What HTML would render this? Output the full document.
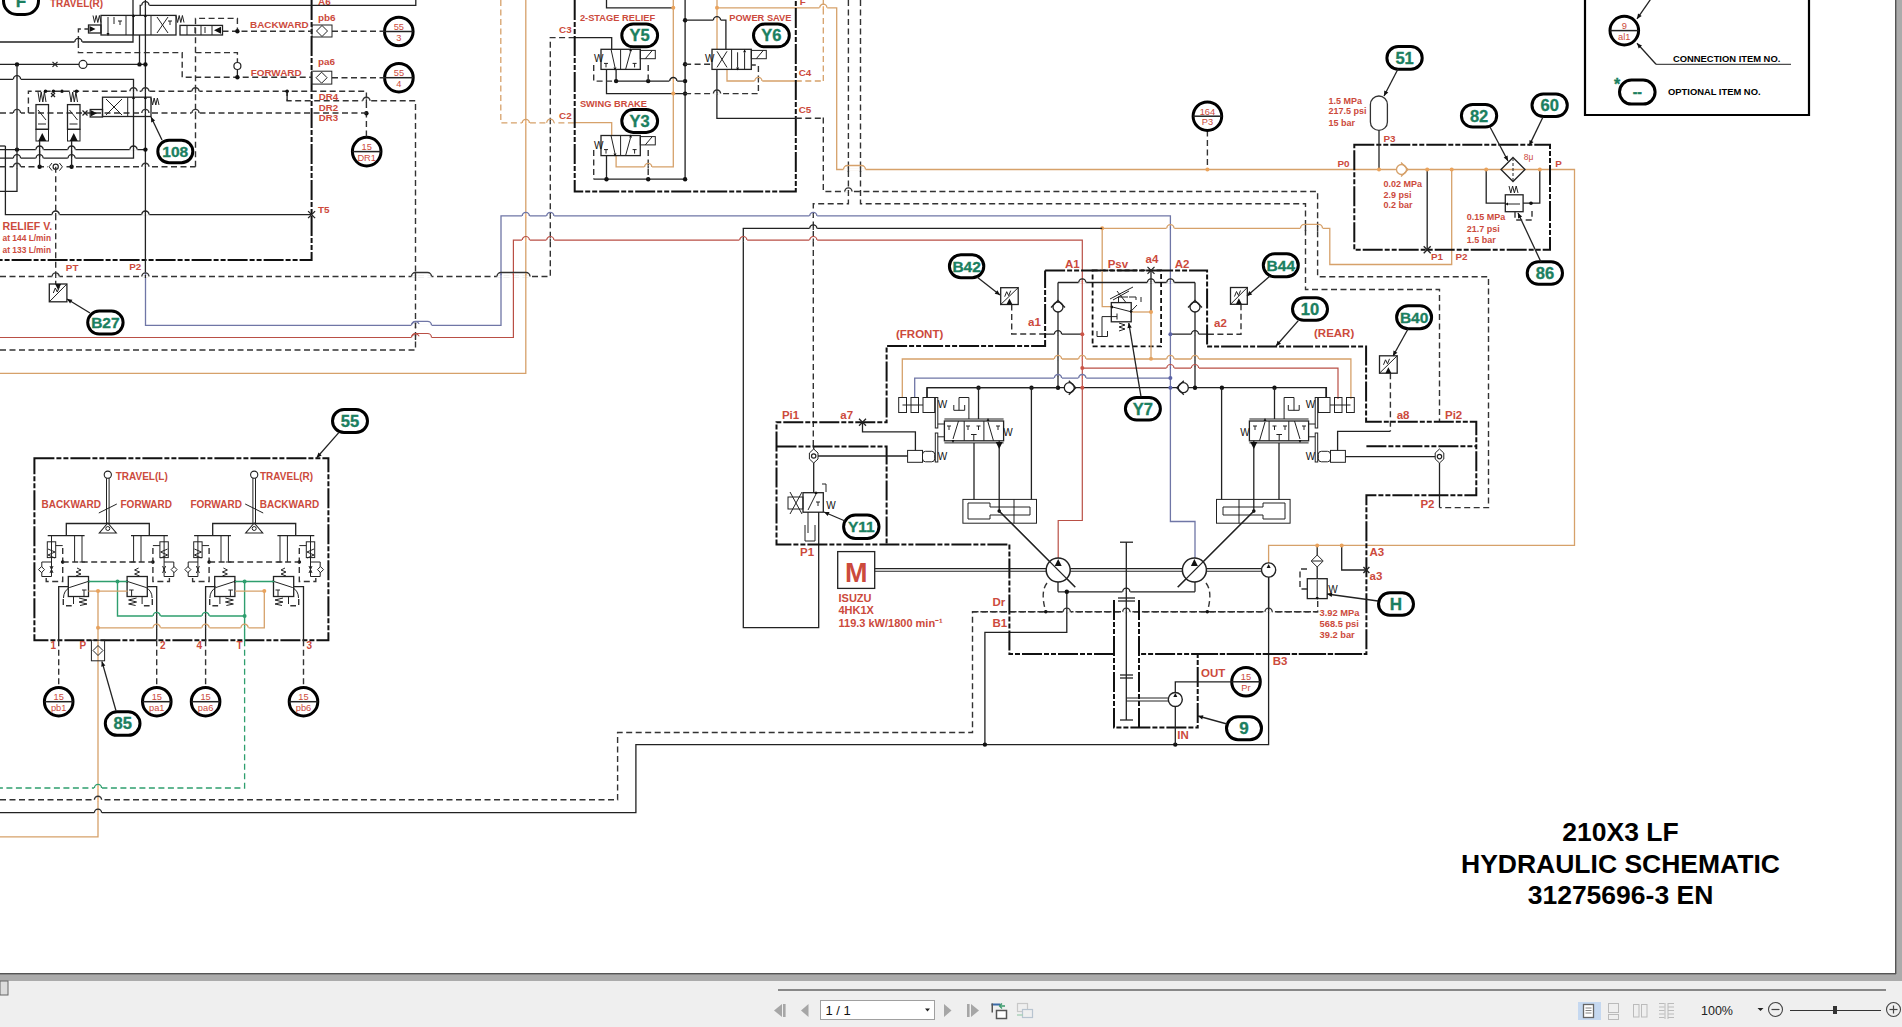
<!DOCTYPE html>
<html><head><meta charset="utf-8">
<style>
html,body{margin:0;padding:0;width:1902px;height:1027px;overflow:hidden;background:#fff;font-family:"Liberation Sans",sans-serif;}
#pg{position:absolute;left:0;top:0;width:1902px;height:1027px;}
svg text{font-family:"Liberation Sans",sans-serif;}
.k{stroke:#222;stroke-width:1.3;fill:none}
.kc{stroke:#222;stroke-width:1.5;fill:none}
.kt{stroke:#222;stroke-width:1;fill:none}
.kd{stroke:#333;stroke-width:1.4;fill:none;stroke-dasharray:6 3.5}
.bx{stroke:#111;stroke-width:2;fill:none;stroke-dasharray:20 2 5 2 5 2}
.bxd{stroke:#111;stroke-width:1.8;fill:none;stroke-dasharray:5 3}
.o{stroke:#d6a16a;stroke-width:1.3;fill:none}
.od{stroke:#d6a16a;stroke-width:1.3;fill:none;stroke-dasharray:6 3.5}
.b{stroke:#6f76a6;stroke-width:1.3;fill:none}
.r{stroke:#b94f45;stroke-width:1.2;fill:none}
.g{stroke:#2e9e6e;stroke-width:1.4;fill:none}
.gd{stroke:#2e9e6e;stroke-width:1.3;fill:none;stroke-dasharray:6 3.5}
.pill{stroke:#000;stroke-width:3;fill:#fff}
.cc{stroke:#000;stroke-width:3;fill:#fff}
.t{fill:#cc4a3c;font-weight:bold}
.gt{fill:#1b7f60;font-weight:bold;stroke:#1b7f60;stroke-width:0.35}
.bt{fill:#000;font-weight:bold}
.wf{fill:#fff}
</style></head><body>
<svg id="pg" width="1902" height="1027" viewBox="0 0 1902 1027">
<rect x="0" y="974" width="1902" height="7" fill="#ababab"/>
<rect x="1896" y="0" width="6" height="981" fill="#ababab"/>
<rect x="0" y="973" width="1896" height="1.4" fill="#555"/>
<rect x="1895" y="0" width="1.4" height="974" fill="#555"/>
<rect x="0" y="981" width="1902" height="46" fill="#efefef"/>
<rect x="0" y="981" width="8" height="14" fill="#dcdcdc" stroke="#666" stroke-width="1"/>
<rect x="778" y="989" width="1108" height="2" fill="#888"/>
<polygon points="774,1010.5 782,1004 782,1017" fill="#a6a6a6"/><rect x="783" y="1004" width="2.6" height="13" fill="#a6a6a6"/>
<polygon points="801,1010.5 808.5,1004 808.5,1017" fill="#a6a6a6"/>
<rect x="820.5" y="1000.5" width="114" height="19" fill="#fff" stroke="#a0a0a0" stroke-width="1"/>
<text x="825.5" y="1015" font-size="13" fill="#111" style="font-family:'Liberation Sans'">1 / 1</text>
<polygon points="925,1008.5 930,1008.5 927.5,1011.5" fill="#222"/>
<polygon points="951.5,1010.5 944,1004 944,1017" fill="#a6a6a6"/>
<rect x="967" y="1004" width="2.6" height="13" fill="#a6a6a6"/><polygon points="979,1010.5 971,1004 971,1017" fill="#a6a6a6"/>
<rect x="991.5" y="1003.5" width="9" height="2" fill="#3b6aa8"/><rect x="991.5" y="1003.5" width="1.5" height="9" fill="#555"/>
<rect x="996.5" y="1010.5" width="10" height="8" fill="#fff" stroke="#555" stroke-width="1.5"/>
<polyline points="1005,1006 1000,1006" stroke="#3a9a6a" stroke-width="1.5" fill="none"/><polyline points="1002,1003.5 999.5,1006 1002,1008.5" stroke="#3a9a6a" stroke-width="1.2" fill="none"/>
<rect x="1017.5" y="1003.5" width="10" height="8" fill="none" stroke="#c8c8c8" stroke-width="1.2"/><rect x="1022.5" y="1009.5" width="10" height="8" fill="#efefef" stroke="#b8c4d0" stroke-width="1.2"/>
<polyline points="1017,1015 1023,1015" stroke="#a8d0b8" stroke-width="1.4" fill="none"/>
<rect x="1578" y="1002" width="23" height="18" fill="#c5d8f0"/>
<rect x="1583.5" y="1004.5" width="10" height="13" fill="#fff" stroke="#666" stroke-width="1.3"/>
<line x1="1585.5" y1="1008" x2="1591.5" y2="1008" stroke="#777" stroke-width="0.9"/>
<line x1="1585.5" y1="1010.5" x2="1591.5" y2="1010.5" stroke="#777" stroke-width="0.9"/>
<line x1="1585.5" y1="1013" x2="1591.5" y2="1013" stroke="#777" stroke-width="0.9"/>
<rect x="1608.5" y="1003.5" width="10" height="9" fill="none" stroke="#bbb" stroke-width="1"/><rect x="1608.5" y="1014.5" width="10" height="5" fill="none" stroke="#bbb" stroke-width="1"/>
<rect x="1633.5" y="1004.5" width="5.5" height="12.5" fill="none" stroke="#bbb" stroke-width="1"/><rect x="1641.5" y="1004.5" width="5.5" height="12.5" fill="none" stroke="#bbb" stroke-width="1"/>
<line x1="1659" y1="1003.5" x2="1664.5" y2="1003.5" stroke="#bbb" stroke-width="1"/><line x1="1668" y1="1003.5" x2="1674" y2="1003.5" stroke="#bbb" stroke-width="1"/>
<line x1="1659" y1="1007" x2="1664.5" y2="1007" stroke="#bbb" stroke-width="1"/><line x1="1668" y1="1007" x2="1674" y2="1007" stroke="#bbb" stroke-width="1"/>
<line x1="1659" y1="1010.5" x2="1664.5" y2="1010.5" stroke="#bbb" stroke-width="1"/><line x1="1668" y1="1010.5" x2="1674" y2="1010.5" stroke="#bbb" stroke-width="1"/>
<line x1="1659" y1="1014" x2="1664.5" y2="1014" stroke="#bbb" stroke-width="1"/><line x1="1668" y1="1014" x2="1674" y2="1014" stroke="#bbb" stroke-width="1"/>
<line x1="1659" y1="1017.5" x2="1664.5" y2="1017.5" stroke="#bbb" stroke-width="1"/><line x1="1668" y1="1017.5" x2="1674" y2="1017.5" stroke="#bbb" stroke-width="1"/>
<line x1="1665" y1="1003" x2="1665" y2="1019" stroke="#bbb" stroke-width="1"/><line x1="1668" y1="1003" x2="1668" y2="1019" stroke="#bbb" stroke-width="1"/>
<text x="1701" y="1015" font-size="12.5" fill="#222">100%</text>
<polygon points="1757.5,1008 1763.5,1008 1760.5,1011" fill="#222"/>
<circle cx="1775.5" cy="1009.5" r="7" fill="none" stroke="#444" stroke-width="1.1"/><line x1="1771.5" y1="1009.5" x2="1779.5" y2="1009.5" stroke="#444" stroke-width="1.2"/>
<line x1="1790" y1="1010.5" x2="1881" y2="1010.5" stroke="#333" stroke-width="1"/><rect x="1833" y="1006" width="4" height="8" fill="#333"/>
<circle cx="1893.5" cy="1009.5" r="7" fill="none" stroke="#444" stroke-width="1.1"/><line x1="1889.5" y1="1009.5" x2="1897.5" y2="1009.5" stroke="#444" stroke-width="1.2"/><line x1="1893.5" y1="1005.5" x2="1893.5" y2="1013.5" stroke="#444" stroke-width="1.2"/>
<text class="bt" x="1620.5" y="840.5" font-size="26.5" text-anchor="middle" >210X3 LF</text>
<text class="bt" x="1620.5" y="872.5" font-size="26.5" text-anchor="middle" >HYDRAULIC SCHEMATIC</text>
<text class="bt" x="1620.5" y="903.5" font-size="26.5" text-anchor="middle" >31275696-3 EN</text>
<polyline points="1585,0 1585,115 1809,115 1809,0" stroke="#000" stroke-width="2.2" fill="none"/>
<circle class="cc" cx="1624.3" cy="30.6" r="14.3"/>
<line class="kc" x1="1610.0" y1="30.6" x2="1638.6" y2="30.6"/>
<text class="t" x="1624.3" y="29.0" font-size="9.3" text-anchor="middle" style="font-weight:normal">9</text>
<text class="t" x="1624.3" y="39.6" font-size="9.3" text-anchor="middle" style="font-weight:normal">al1</text>
<line class="k" x1="1651.5" y1="-2.0" x2="1637.0" y2="18.9"/>
<polygon points="1637.0,18.9 1638.0,13.5 1641.7,16.0" fill="#111"/>
<line class="k" x1="1656.0" y1="64.3" x2="1637.0" y2="43.2"/>
<polygon points="1637.0,43.2 1642.0,45.4 1638.7,48.4" fill="#111"/>
<line class="kt" x1="1656.0" y1="64.3" x2="1791.0" y2="64.3"/>
<text class="bt" x="1673.0" y="62.0" font-size="9.4" text-anchor="start" >CONNECTION ITEM NO.</text>
<text class="gt" x="1614.0" y="90.0" font-size="16" text-anchor="start" >*</text>
<rect class="pill" x="1619.5" y="80.1" width="35.6" height="24" rx="12.0"/>
<text class="gt" x="1637.3" y="97.1" font-size="14" text-anchor="middle">--</text>
<text class="bt" x="1668.0" y="95.0" font-size="9.4" text-anchor="start" >OPTIONAL ITEM NO.</text>
<polyline class="b" points="145.5,272.0 145.5,325.3 501.0,325.3 501.0,215.9 1170.4,215.9 1170.4,521.5 1195.0,521.5 1195.0,558.0"/>
<polyline class="r" points="0.0,337.5 513.4,337.5 513.4,240.1 1082.3,240.1 1082.3,520.5 1058.2,520.5 1058.2,558.0"/>
<polyline class="o" points="0.0,373.3 525.8,373.3 525.8,0.0"/>
<polyline class="od" points="500.8,0.0 500.8,122.9 574.7,122.9"/>
<polyline class="o" points="574.7,122.7 611.7,122.7 611.7,135.5"/>
<polyline class="o" points="717.0,0.0 717.0,49.3"/>
<polyline class="o" points="717.0,7.8 836.7,7.8 836.7,169.5 1574.5,169.5 1574.5,545.3 1268.6,545.3 1268.6,563.0"/>
<polyline class="o" points="727.0,69.4 727.0,81.0 795.8,81.0"/>
<polyline class="od" points="795.8,81.0 823.3,81.0"/>
<polyline class="od" points="823.3,81.0 823.3,0.0"/>
<polyline class="o" points="673.3,0.0 673.3,166.9 616.1,166.9 616.1,155.0"/>
<polyline class="k" points="606.5,0.0 606.5,7.8 673.3,7.8"/>
<circle cx="673.3" cy="7.8" r="2" fill="#eaa35c"/>
<polyline class="o" points="1102.2,228.3 1329.8,228.3 1329.8,264.5 1451.7,264.5 1451.7,169.5"/>
<polyline class="o" points="1102.2,228.3 1102.2,306.6 1111.3,306.6"/>
<circle cx="1102.2" cy="228.3" r="2" fill="#eaa35c"/>
<polyline class="o" points="902.3,397.5 902.3,359.0 1350.9,359.0 1350.9,399.0"/>
<polyline class="o" points="1131.2,312.0 1151.0,312.0"/>
<circle cx="1151.0" cy="358.7" r="2" fill="#eaa35c"/>
<polyline class="r" points="1082.3,368.1 1338.0,368.1 1338.0,399.0"/>
<polyline class="b" points="914.7,397.0 914.7,378.1 1170.4,378.1"/>
<polyline class="k" points="742.7,228.4 1102.2,228.4"/>
<polyline class="k" points="743.3,228.4 743.3,627.6 818.7,627.6 818.7,512.0"/>
<polyline class="k" points="0.0,812.7 635.9,812.7 635.9,744.6 1268.6,744.6 1268.6,577.0"/>
<polyline class="k" points="984.9,744.6 984.9,632.4 1066.8,632.4 1066.8,591.8"/>
<circle cx="984.9" cy="744.6" r="2.2" fill="#111"/>
<circle cx="1175.3" cy="744.6" r="2.2" fill="#111"/>
<polyline class="k" points="1058.0,591.8 1195.0,591.8"/>
<polyline class="k" points="1058.0,582.0 1058.0,591.8"/>
<polyline class="k" points="1195.0,582.0 1195.0,591.8"/>
<circle cx="1066.8" cy="591.8" r="2.2" fill="#111"/>
<polyline class="k" points="1058.0,282.5 1195.0,282.5"/>
<polyline class="k" points="1058.0,282.5 1058.0,387.7"/>
<polyline class="k" points="1195.0,282.5 1195.0,387.7"/>
<polyline class="k" points="927.0,397.7 927.0,387.7 1326.4,387.7 1326.4,397.7"/>
<circle cx="978.5" cy="387.7" r="2.2" fill="#111"/>
<circle cx="1031.5" cy="387.7" r="2.2" fill="#111"/>
<circle cx="1058.0" cy="387.7" r="2.2" fill="#111"/>
<circle cx="1195.0" cy="387.7" r="2.2" fill="#111"/>
<circle cx="1221.9" cy="387.7" r="2.2" fill="#111"/>
<circle cx="1274.5" cy="387.7" r="2.2" fill="#111"/>
<polyline class="k" points="1045.1,334.2 1082.3,334.2"/>
<polyline class="k" points="1170.4,334.2 1207.0,334.2"/>
<circle cx="1082.3" cy="334.2" r="2" fill="#cc5548"/>
<circle cx="1082.3" cy="368.1" r="2" fill="#cc5548"/>
<circle cx="1082.3" cy="387.7" r="2" fill="#cc5548"/>
<circle cx="1170.4" cy="334.2" r="2" fill="#5b63a8"/>
<circle cx="1170.4" cy="378.1" r="2" fill="#5b63a8"/>
<circle cx="1170.4" cy="387.7" r="2" fill="#5b63a8"/>
<circle cx="1058" cy="307" r="5" fill="#fff" stroke="#222" stroke-width="1.3"/>
<polyline class="k" points="1051.0,307.5 1058.0,300.5 1065.0,307.5"/>
<circle cx="1195" cy="307" r="5" fill="#fff" stroke="#222" stroke-width="1.3"/>
<polyline class="k" points="1188.0,307.5 1195.0,300.5 1202.0,307.5"/>
<circle cx="1069.3" cy="387.7" r="5" fill="#fff" stroke="#222" stroke-width="1.3"/>
<polyline class="k" points="1068.8,380.7 1075.8,387.7 1068.8,394.7"/>
<circle cx="1183.3" cy="387.7" r="5" fill="#fff" stroke="#222" stroke-width="1.3"/>
<polyline class="k" points="1183.8,380.7 1176.8,387.7 1183.8,394.7"/>
<polyline class="kd" points="0.0,799.8 617.6,799.8 617.6,732.5 972.5,732.5 972.5,611.7 1317.7,611.7 1317.7,598.6"/>
<polyline class="kd" points="0.0,276.5 550.3,276.5 550.3,37.6 574.7,37.6"/>
<polyline class="k" points="574.7,37.6 611.7,37.6 611.7,49.3"/>
<polyline class="kd" points="0.0,350.0 415.5,350.0 415.5,100.8 287.1,100.8 287.1,91.3"/>
<polyline class="kd" points="823.3,117.6 823.3,191.5 1317.6,191.5 1317.6,276.7 1488.5,276.7 1488.5,507.6 1439.5,507.6"/>
<polyline class="kd" points="848.4,0.0 848.4,203.8 813.3,203.8 813.3,446.6"/>
<polyline class="kd" points="860.5,0.0 860.5,203.8 1305.5,203.8 1305.5,289.5 1439.5,289.5 1439.5,421.7"/>
<polyline class="kd" points="1207.4,130.5 1207.4,169.5"/>
<circle cx="1207.4" cy="169.5" r="2" fill="#eaa35c"/>
<polyline class="kd" points="1011.7,304.5 1011.7,334.0 1045.6,334.0"/>
<polyline class="kd" points="1241.0,304.3 1241.0,334.2 1207.0,334.2"/>
<polyline class="kd" points="1390.4,373.2 1390.4,431.3"/>
<polyline class="kd" points="972.5,611.7 1317.7,611.7"/>
<polyline class="bx" points="1045.1,270.4 1207.1,270.4 1207.1,346.4 1366.1,346.4 1366.1,421.7 1476.3,421.7 1476.3,495.3 1366.4,495.3 1366.4,654.0 1139.0,654.0"/>
<polyline class="bx" points="1114.0,654.0 1009.4,654.0 1009.4,544.6 776.5,544.6 776.5,422.3 886.6,422.3 886.6,346.1 1045.1,346.1 1045.1,270.4"/>
<rect class="bxd" x="1092.6" y="270.4" width="68.5" height="76.0"/>
<polyline class="bx" points="776.5,446.6 886.6,446.6 886.6,544.6"/>
<polyline class="bx" points="1366.4,446.3 1476.3,446.3"/>
<polyline class="bx" points="1114.0,600.0 1114.0,727.6 1197.7,727.6 1197.7,654.0"/>
<polyline class="bx" points="1139.0,600.0 1139.0,727.6"/>
<polyline class="bx" points="574.7,0.0 574.7,191.5 795.8,191.5 795.8,0.0"/>
<rect class="bx" x="1354.3" y="144.8" width="195.7" height="105.0"/>
<polyline class="bx" points="311.6,0.0 311.6,260.0 0.0,260.0"/>
<rect class="bx" x="34.4" y="458.2" width="294.0" height="182.0"/>
<rect class="pill" x="3.5" y="-12.5" width="35" height="27" rx="13.5"/>
<text class="gt" x="21.0" y="7.1" font-size="17" text-anchor="middle">F</text>
<rect class="pill" x="157.8" y="140.2" width="35" height="22.5" rx="11.25"/>
<text class="gt" x="175.3" y="157.1" font-size="15.5" text-anchor="middle">108</text>
<rect class="pill" x="87.7" y="311.1" width="35.4" height="23" rx="11.5"/>
<text class="gt" x="105.4" y="328.2" font-size="15.5" text-anchor="middle">B27</text>
<rect class="pill" x="621.8" y="24.0" width="35.8" height="22.8" rx="11.4"/>
<text class="gt" x="639.7" y="41.3" font-size="16.5" text-anchor="middle">Y5</text>
<rect class="pill" x="753.5" y="24.0" width="35.8" height="22.8" rx="11.4"/>
<text class="gt" x="771.4" y="41.3" font-size="16.5" text-anchor="middle">Y6</text>
<rect class="pill" x="621.8" y="109.6" width="35.8" height="22.8" rx="11.4"/>
<text class="gt" x="639.7" y="126.9" font-size="16.5" text-anchor="middle">Y3</text>
<rect class="pill" x="1386.9" y="46.6" width="35.3" height="22.6" rx="11.3"/>
<text class="gt" x="1404.6" y="63.8" font-size="16.5" text-anchor="middle">51</text>
<rect class="pill" x="1461.4" y="104.4" width="35.3" height="22.6" rx="11.3"/>
<text class="gt" x="1479.1" y="121.6" font-size="16.5" text-anchor="middle">82</text>
<rect class="pill" x="1532.0" y="94.0" width="35.3" height="22.6" rx="11.3"/>
<text class="gt" x="1549.7" y="111.2" font-size="16.5" text-anchor="middle">60</text>
<rect class="pill" x="1527.2" y="261.7" width="35.3" height="22.6" rx="11.3"/>
<text class="gt" x="1544.9" y="278.9" font-size="16.5" text-anchor="middle">86</text>
<rect class="pill" x="949.4" y="254.7" width="34.4" height="23" rx="11.5"/>
<text class="gt" x="966.6" y="271.8" font-size="15.5" text-anchor="middle">B42</text>
<rect class="pill" x="1263.3" y="253.7" width="35" height="23" rx="11.5"/>
<text class="gt" x="1280.8" y="270.8" font-size="15.5" text-anchor="middle">B44</text>
<rect class="pill" x="1292.5" y="297.8" width="35" height="22.5" rx="11.25"/>
<text class="gt" x="1310.0" y="314.9" font-size="16.5" text-anchor="middle">10</text>
<rect class="pill" x="1396.6" y="305.8" width="35" height="23" rx="11.5"/>
<text class="gt" x="1414.1" y="322.9" font-size="15.5" text-anchor="middle">B40</text>
<rect class="pill" x="1125.4" y="397.6" width="35" height="22.5" rx="11.25"/>
<text class="gt" x="1142.9" y="414.7" font-size="16.5" text-anchor="middle">Y7</text>
<rect class="pill" x="843.6" y="515.0" width="35.4" height="23.5" rx="11.75"/>
<text class="gt" x="861.3" y="532.4" font-size="15.5" text-anchor="middle">Y11</text>
<rect class="pill" x="1378.5" y="592.8" width="35" height="22.5" rx="11.25"/>
<text class="gt" x="1396.0" y="610.1" font-size="17" text-anchor="middle">H</text>
<rect class="pill" x="1226.5" y="716.7" width="35" height="23" rx="11.5"/>
<text class="gt" x="1244.0" y="734.3" font-size="17" text-anchor="middle">9</text>
<rect class="pill" x="332.5" y="409.5" width="35" height="23" rx="11.5"/>
<text class="gt" x="350.0" y="426.9" font-size="16.5" text-anchor="middle">55</text>
<rect class="pill" x="105.3" y="711.8" width="34.7" height="23.5" rx="11.75"/>
<text class="gt" x="122.7" y="729.4" font-size="16.5" text-anchor="middle">85</text>
<circle class="cc" cx="398.8" cy="31.5" r="14.3"/>
<line class="kc" x1="384.5" y1="31.5" x2="413.1" y2="31.5"/>
<text class="t" x="398.8" y="29.9" font-size="9.3" text-anchor="middle" style="font-weight:normal">55</text>
<text class="t" x="398.8" y="40.5" font-size="9.3" text-anchor="middle" style="font-weight:normal">3</text>
<circle class="cc" cx="398.9" cy="77.7" r="14.3"/>
<line class="kc" x1="384.6" y1="77.7" x2="413.2" y2="77.7"/>
<text class="t" x="398.9" y="76.1" font-size="9.3" text-anchor="middle" style="font-weight:normal">55</text>
<text class="t" x="398.9" y="86.7" font-size="9.3" text-anchor="middle" style="font-weight:normal">4</text>
<circle class="cc" cx="366.7" cy="151.6" r="14.3"/>
<line class="kc" x1="352.4" y1="151.6" x2="381.0" y2="151.6"/>
<text class="t" x="366.7" y="150.0" font-size="9.3" text-anchor="middle" style="font-weight:normal">15</text>
<text class="t" x="366.7" y="160.6" font-size="9.3" text-anchor="middle" style="font-weight:normal">DR1</text>
<circle class="cc" cx="1207.4" cy="116.2" r="14.3"/>
<line class="kc" x1="1193.1" y1="116.2" x2="1221.7" y2="116.2"/>
<text class="t" x="1207.4" y="114.6" font-size="9.3" text-anchor="middle" style="font-weight:normal">164</text>
<text class="t" x="1207.4" y="125.2" font-size="9.3" text-anchor="middle" style="font-weight:normal">P3</text>
<circle class="cc" cx="1246.0" cy="681.8" r="14.3"/>
<line class="kc" x1="1231.7" y1="681.8" x2="1260.3" y2="681.8"/>
<text class="t" x="1246.0" y="680.2" font-size="9.3" text-anchor="middle" style="font-weight:normal">15</text>
<text class="t" x="1246.0" y="690.8" font-size="9.3" text-anchor="middle" style="font-weight:normal">Pr</text>
<circle class="cc" cx="58.7" cy="701.7" r="14.3"/>
<line class="kc" x1="44.4" y1="701.7" x2="73.0" y2="701.7"/>
<text class="t" x="58.7" y="700.1" font-size="9.3" text-anchor="middle" style="font-weight:normal">15</text>
<text class="t" x="58.7" y="710.7" font-size="9.3" text-anchor="middle" style="font-weight:normal">pb1</text>
<circle class="cc" cx="156.8" cy="701.7" r="14.3"/>
<line class="kc" x1="142.5" y1="701.7" x2="171.1" y2="701.7"/>
<text class="t" x="156.8" y="700.1" font-size="9.3" text-anchor="middle" style="font-weight:normal">15</text>
<text class="t" x="156.8" y="710.7" font-size="9.3" text-anchor="middle" style="font-weight:normal">pa1</text>
<circle class="cc" cx="205.6" cy="701.7" r="14.3"/>
<line class="kc" x1="191.3" y1="701.7" x2="219.9" y2="701.7"/>
<text class="t" x="205.6" y="700.1" font-size="9.3" text-anchor="middle" style="font-weight:normal">15</text>
<text class="t" x="205.6" y="710.7" font-size="9.3" text-anchor="middle" style="font-weight:normal">pa6</text>
<circle class="cc" cx="303.5" cy="701.7" r="14.3"/>
<line class="kc" x1="289.2" y1="701.7" x2="317.8" y2="701.7"/>
<text class="t" x="303.5" y="700.1" font-size="9.3" text-anchor="middle" style="font-weight:normal">15</text>
<text class="t" x="303.5" y="710.7" font-size="9.3" text-anchor="middle" style="font-weight:normal">pb6</text>
<text class="t" x="50.0" y="7.0" font-size="10" text-anchor="start" >TRAVEL(R)</text>
<text class="t" x="250.0" y="27.8" font-size="9.9" text-anchor="start" >BACKWARD</text>
<text class="t" x="318.0" y="21.0" font-size="9.9" text-anchor="start" >pb6</text>
<text class="t" x="250.7" y="75.7" font-size="9.9" text-anchor="start" >FORWARD</text>
<text class="t" x="318.0" y="65.0" font-size="9.9" text-anchor="start" >pa6</text>
<text class="t" x="318.7" y="99.6" font-size="9.7" text-anchor="start" >DR4</text>
<text class="t" x="318.7" y="111.2" font-size="9.7" text-anchor="start" >DR2</text>
<text class="t" x="318.7" y="120.5" font-size="9.7" text-anchor="start" >DR3</text>
<text class="t" x="318.0" y="213.0" font-size="9.9" text-anchor="start" >T5</text>
<text class="t" x="2.6" y="229.6" font-size="10.6" text-anchor="start" >RELIEF V.</text>
<text class="t" x="2.6" y="241.4" font-size="8.4" text-anchor="start" >at 144 L/min</text>
<text class="t" x="2.6" y="252.5" font-size="8.4" text-anchor="start" >at 133 L/min</text>
<text class="t" x="65.8" y="271.1" font-size="9.9" text-anchor="start" >PT</text>
<text class="t" x="129.2" y="270.3" font-size="9.9" text-anchor="start" >P2</text>
<text class="t" x="318.0" y="5.0" font-size="9.9" text-anchor="start" >A6</text>
<text class="t" x="579.9" y="21.3" font-size="9.3" text-anchor="start" >2-STAGE RELIEF</text>
<text class="t" x="729.2" y="20.6" font-size="9.3" text-anchor="start" >POWER SAVE</text>
<text class="t" x="579.9" y="106.8" font-size="9.3" text-anchor="start" >SWING BRAKE</text>
<text class="t" x="559.0" y="32.5" font-size="9.9" text-anchor="start" >C3</text>
<text class="t" x="559.0" y="118.7" font-size="9.9" text-anchor="start" >C2</text>
<text class="t" x="798.7" y="76.0" font-size="9.9" text-anchor="start" >C4</text>
<text class="t" x="798.7" y="113.0" font-size="9.9" text-anchor="start" >C5</text>
<text class="t" x="799.8" y="5.0" font-size="9.9" text-anchor="start" >F</text>
<text class="t" x="1328.4" y="103.9" font-size="9" text-anchor="start" >1.5 MPa</text>
<text class="t" x="1328.4" y="114.3" font-size="9" text-anchor="start" >217.5 psi</text>
<text class="t" x="1328.4" y="125.6" font-size="9" text-anchor="start" >15 bar</text>
<text class="t" x="1383.4" y="142.0" font-size="9.9" text-anchor="start" >P3</text>
<text class="t" x="1337.4" y="166.5" font-size="9.9" text-anchor="start" >P0</text>
<text class="t" x="1555.3" y="166.5" font-size="9.9" text-anchor="start" >P</text>
<text class="t" x="1383.4" y="187.0" font-size="9" text-anchor="start" >0.02 MPa</text>
<text class="t" x="1383.4" y="197.6" font-size="9" text-anchor="start" >2.9 psi</text>
<text class="t" x="1383.4" y="208.3" font-size="9" text-anchor="start" >0.2 bar</text>
<text class="t" x="1523.7" y="159.5" font-size="8.5" text-anchor="start" style="font-weight:normal">8μ</text>
<text class="t" x="1466.7" y="220.2" font-size="9" text-anchor="start" >0.15 MPa</text>
<text class="t" x="1466.7" y="231.5" font-size="9" text-anchor="start" >21.7 psi</text>
<text class="t" x="1466.7" y="242.8" font-size="9" text-anchor="start" >1.5 bar</text>
<text class="t" x="1431.0" y="260.3" font-size="9.9" text-anchor="start" >P1</text>
<text class="t" x="1455.4" y="260.3" font-size="9.9" text-anchor="start" >P2</text>
<text class="t" x="1064.9" y="267.8" font-size="11.5" text-anchor="start" >A1</text>
<text class="t" x="1107.7" y="267.8" font-size="11.5" text-anchor="start" >Psv</text>
<text class="t" x="1145.6" y="263.0" font-size="11.5" text-anchor="start" >a4</text>
<text class="t" x="1174.8" y="267.8" font-size="11.5" text-anchor="start" >A2</text>
<text class="t" x="1028.0" y="326.2" font-size="11.5" text-anchor="start" >a1</text>
<text class="t" x="1214.1" y="327.0" font-size="11.5" text-anchor="start" >a2</text>
<text class="t" x="896.0" y="337.9" font-size="11.5" text-anchor="start" >(FRONT)</text>
<text class="t" x="1314.0" y="337.0" font-size="11.5" text-anchor="start" >(REAR)</text>
<text class="t" x="781.9" y="418.6" font-size="11.5" text-anchor="start" >Pi1</text>
<text class="t" x="840.3" y="418.6" font-size="11.5" text-anchor="start" >a7</text>
<text class="t" x="1396.7" y="418.5" font-size="11.5" text-anchor="start" >a8</text>
<text class="t" x="1445.0" y="418.5" font-size="11.5" text-anchor="start" >Pi2</text>
<text class="t" x="800.0" y="556.0" font-size="11.5" text-anchor="start" >P1</text>
<text class="t" x="1420.4" y="507.6" font-size="11.5" text-anchor="start" >P2</text>
<text class="t" x="1369.5" y="556.4" font-size="11.5" text-anchor="start" >A3</text>
<text class="t" x="1369.5" y="580.4" font-size="11.5" text-anchor="start" >a3</text>
<text class="t" x="838.5" y="602.3" font-size="11" text-anchor="start" >ISUZU</text>
<text class="t" x="838.5" y="614.2" font-size="11" text-anchor="start" >4HK1X</text>
<text class="t" x="838.5" y="626.8" font-size="11" text-anchor="start" >119.3 kW/1800 min⁻¹</text>
<text class="t" x="992.4" y="606.0" font-size="11.5" text-anchor="start" >Dr</text>
<text class="t" x="992.4" y="626.8" font-size="11.5" text-anchor="start" >B1</text>
<text class="t" x="1319.6" y="615.5" font-size="9.3" text-anchor="start" >3.92 MPa</text>
<text class="t" x="1319.6" y="626.6" font-size="9.3" text-anchor="start" >568.5 psi</text>
<text class="t" x="1319.6" y="638.2" font-size="9.3" text-anchor="start" >39.2 bar</text>
<text class="t" x="1272.7" y="665.4" font-size="11.5" text-anchor="start" >B3</text>
<text class="t" x="1201.0" y="676.9" font-size="11.5" text-anchor="start" >OUT</text>
<text class="t" x="1177.3" y="739.0" font-size="11.5" text-anchor="start" >IN</text>
<text class="t" x="115.7" y="479.7" font-size="10" text-anchor="start" >TRAVEL(L)</text>
<text class="t" x="260.0" y="479.7" font-size="10" text-anchor="start" >TRAVEL(R)</text>
<text class="t" x="41.5" y="507.6" font-size="10" text-anchor="start" >BACKWARD</text>
<text class="t" x="120.5" y="507.6" font-size="10" text-anchor="start" >FORWARD</text>
<text class="t" x="190.4" y="507.6" font-size="10" text-anchor="start" >FORWARD</text>
<text class="t" x="259.7" y="507.6" font-size="10" text-anchor="start" >BACKWARD</text>
<text class="t" x="50.4" y="649.4" font-size="10" text-anchor="start" >1</text>
<text class="t" x="79.5" y="649.4" font-size="10" text-anchor="start" >P</text>
<text class="t" x="160.0" y="649.4" font-size="10" text-anchor="start" >2</text>
<text class="t" x="196.5" y="649.4" font-size="10" text-anchor="start" >4</text>
<text class="t" x="236.5" y="649.4" font-size="10" text-anchor="start" >T</text>
<text class="t" x="306.6" y="649.4" font-size="10" text-anchor="start" >3</text>
<rect class="k" x="837.7" y="551.6" width="37.0" height="36.8"/>
<text class="t" x="856.2" y="582.0" font-size="27" text-anchor="middle" >M</text>
<line class="k" x1="1398.0" y1="69.0" x2="1384.0" y2="96.0"/>
<polygon points="1384.0,96.0 1384.3,90.5 1388.3,92.6" fill="#111"/>
<line class="k" x1="1490.0" y1="127.0" x2="1508.0" y2="161.0"/>
<polygon points="1508.0,161.0 1503.7,157.6 1507.6,155.6" fill="#111"/>
<line class="k" x1="1543.0" y1="117.0" x2="1529.3" y2="145.4"/>
<polygon points="1529.3,145.4 1529.5,139.9 1533.5,141.9" fill="#111"/>
<line class="k" x1="1541.0" y1="262.0" x2="1518.0" y2="213.0"/>
<polygon points="1518.0,213.0 1522.1,216.6 1518.1,218.5" fill="#111"/>
<line class="k" x1="977.0" y1="277.0" x2="1000.0" y2="295.0"/>
<polygon points="1000.0,295.0 994.7,293.7 997.4,290.2" fill="#111"/>
<line class="k" x1="1270.0" y1="276.0" x2="1247.0" y2="296.0"/>
<polygon points="1247.0,296.0 1249.3,291.1 1252.2,294.4" fill="#111"/>
<line class="k" x1="1298.3" y1="320.6" x2="1276.0" y2="346.0"/>
<polygon points="1276.0,346.0 1277.6,340.8 1281.0,343.7" fill="#111"/>
<line class="k" x1="1408.0" y1="329.0" x2="1393.0" y2="356.0"/>
<polygon points="1393.0,356.0 1393.5,350.6 1397.4,352.7" fill="#111"/>
<line class="k" x1="1141.0" y1="396.6" x2="1128.8" y2="323.0"/>
<polygon points="1128.8,323.0 1131.8,327.6 1127.4,328.3" fill="#111"/>
<line class="k" x1="845.0" y1="521.0" x2="824.0" y2="512.0"/>
<polygon points="824.0,512.0 829.5,511.9 827.7,516.0" fill="#111"/>
<line class="k" x1="1378.0" y1="601.0" x2="1327.0" y2="594.0"/>
<polygon points="1327.0,594.0 1332.3,592.5 1331.7,596.9" fill="#111"/>
<line class="k" x1="1227.0" y1="724.0" x2="1198.0" y2="716.0"/>
<polygon points="1198.0,716.0 1203.4,715.2 1202.2,719.5" fill="#111"/>
<line class="k" x1="339.0" y1="432.4" x2="316.7" y2="457.7"/>
<polygon points="316.7,457.7 318.4,452.5 321.7,455.4" fill="#111"/>
<line class="k" x1="116.0" y1="710.7" x2="101.9" y2="661.4"/>
<polygon points="101.9,661.4 105.4,665.6 101.2,666.8" fill="#111"/>
<line class="k" x1="162.0" y1="140.0" x2="151.0" y2="117.0"/>
<polygon points="151.0,117.0 155.1,120.6 151.2,122.5" fill="#111"/>
<line class="k" x1="90.0" y1="313.0" x2="67.0" y2="299.0"/>
<polygon points="67.0,299.0 72.4,299.7 70.1,303.5" fill="#111"/>
<polyline class="k" points="0.0,42.0 133.0,42.0 133.0,0.0"/>
<polyline class="k" points="145.4,0.0 145.4,272.0"/>
<polyline class="k" points="140.2,15.4 140.2,5.3 415.8,5.3 415.8,0.0"/>
<rect class="k" x="101.0" y="15.4" width="75.0" height="19.6"/>
<line class="kt" x1="126.0" y1="15.4" x2="126.0" y2="35.0"/>
<line class="kt" x1="151.0" y1="15.4" x2="151.0" y2="35.0"/>
<line class="kt" x1="108.0" y1="17.0" x2="108.0" y2="33.0"/>
<polygon points="106.5,33 108,36 109.5,33" fill="#111"/>
<line class="kt" x1="114.0" y1="17.0" x2="114.0" y2="24.0"/>
<line class="kt" x1="118.0" y1="21.0" x2="122.0" y2="21.0"/>
<line class="kt" x1="120.0" y1="21.0" x2="120.0" y2="25.0"/>
<line class="kt" x1="133.5" y1="17.0" x2="133.5" y2="35.0"/>
<polygon points="132.0,17 133.5,14 135.0,17" fill="#111"/>
<line class="kt" x1="145.4" y1="17.0" x2="145.4" y2="35.0"/>
<polygon points="143.9,17 145.4,14 146.9,17" fill="#111"/>
<line class="kt" x1="157.0" y1="17.0" x2="168.0" y2="33.0"/>
<line class="kt" x1="168.0" y1="17.0" x2="157.0" y2="33.0"/>
<line class="kt" x1="168.0" y1="21.0" x2="172.0" y2="21.0"/>
<line class="kt" x1="170.0" y1="21.0" x2="170.0" y2="25.0"/>
<rect class="k" x="88.5" y="25.0" width="12.5" height="8.0"/>
<polygon points="89.5,26.0 95.5,29 89.5,32.0" fill="#111"/>
<polyline class="kt" points="93.0,15.5 94.6,22.5 96.2,15.5 97.8,22.5 99.4,15.5 101.0,22.5"/>
<polyline class="kt" points="176.0,15.5 177.6,22.5 179.2,15.5 180.8,22.5 182.4,15.5 184.0,22.5"/>
<rect class="k" x="180.0" y="25.4" width="42.5" height="9.6"/>
<line class="kt" x1="187.0" y1="25.4" x2="187.0" y2="35.0"/>
<line class="kt" x1="201.0" y1="25.4" x2="201.0" y2="35.0"/>
<line class="kt" x1="212.0" y1="25.4" x2="212.0" y2="35.0"/>
<line class="kt" x1="195.0" y1="27.0" x2="195.0" y2="33.0"/>
<line class="kt" x1="205.0" y1="27.0" x2="205.0" y2="33.0"/>
<polygon points="221,26.7 214,30.2 221,33.7" fill="#111"/>
<polyline class="kd" points="78.4,42.0 78.4,29.0 88.5,29.0"/>
<polyline class="kd" points="78.4,42.0 78.4,52.6 182.2,52.6 182.2,77.2 311.6,77.2"/>
<polyline class="kd" points="222.5,31.2 311.6,31.2"/>
<polyline class="kd" points="332.0,31.2 384.5,31.2"/>
<polyline class="kd" points="332.0,77.7 384.6,77.7"/>
<rect class="kt" x="312.0" y="25.0" width="20.0" height="12.0"/>
<polygon class="kt" points="322,25.5 327.5,31 322,36.5 316.5,31"/>
<rect class="kt" x="311.6" y="71.2" width="20.2" height="12.9"/>
<polygon class="kt" points="321.6,72.2 327.1,77.7 321.6,83.2 316.1,77.7"/>
<polyline class="kd" points="195.5,166.8 195.5,18.4 237.4,18.4 237.4,31.2"/>
<circle cx="237.4" cy="31.2" r="2.2" fill="#111"/>
<polyline class="kd" points="195.5,52.6 237.4,52.6 237.4,62.0"/>
<circle cx="237.4" cy="66" r="3.5" fill="#fff" stroke="#222" stroke-width="1.2"/>
<line class="k" x1="237.4" y1="70.0" x2="237.4" y2="77.2"/>
<circle cx="237.4" cy="77.2" r="2.2" fill="#111"/>
<polyline class="k" points="0.0,64.4 145.4,64.4"/>
<circle cx="17.0" cy="64.4" r="2.2" fill="#111"/>
<circle cx="139.5" cy="64.4" r="2.2" fill="#111"/>
<circle cx="145.4" cy="64.4" r="2.2" fill="#111"/>
<line class="k" x1="52.5" y1="61.9" x2="57.5" y2="66.9"/>
<line class="k" x1="52.5" y1="66.9" x2="57.5" y2="61.9"/>
<circle cx="83" cy="64.4" r="4" fill="#fff" stroke="#222" stroke-width="1.2"/>
<polyline class="k" points="139.5,35.0 139.5,64.4"/>
<polyline class="k" points="0.0,79.3 133.5,79.3 133.5,158.2 0.0,158.2"/>
<polyline class="k" points="0.0,149.6 145.4,149.6"/>
<circle cx="17.0" cy="149.6" r="2.2" fill="#111"/>
<circle cx="145.4" cy="149.6" r="2.2" fill="#111"/>
<polyline class="k" points="17.0,64.4 17.0,191.4 0.0,191.4"/>
<polyline class="k" points="5.4,146.0 5.4,214.6 311.6,214.6"/>
<line class="k" x1="308.1" y1="211.1" x2="315.1" y2="218.1"/>
<line class="k" x1="308.1" y1="218.1" x2="315.1" y2="211.1"/>
<polyline class="k" points="0.0,146.0 5.4,146.0"/>
<polyline class="kd" points="0.0,166.8 195.5,166.8"/>
<circle cx="39.6" cy="166.8" r="2.2" fill="#111"/>
<circle cx="71.6" cy="166.8" r="2.2" fill="#111"/>
<rect x="48" y="163" width="15.4" height="7.6" fill="#fff"/>
<circle cx="55.7" cy="166.8" r="2.6" fill="#fff" stroke="#222" stroke-width="1.2"/>
<polyline class="kt" points="52.0,163.0 49.0,166.8 52.0,170.6"/>
<polyline class="kt" points="59.4,163.0 62.4,166.8 59.4,170.6"/>
<polyline class="kd" points="55.7,166.8 55.7,284.0"/>
<rect class="k" x="49.3" y="284.0" width="17.6" height="17.8"/>
<line class="kt" x1="49.3" y1="301.8" x2="66.9" y2="284.0"/>
<polygon points="55.1,284 58.1,290 61.1,284" fill="#111"/>
<polyline class="kt" points="53.3,293.0 55.3,288.0 57.3,292.0 59.3,287.0"/>
<polyline class="kd" points="28.4,113.0 28.4,91.3 366.4,91.3 366.4,137.0"/>
<circle cx="366.4" cy="113.2" r="2.2" fill="#111"/>
<circle cx="45.5" cy="91.3" r="1.8" fill="#111"/>
<circle cx="53.4" cy="91.3" r="1.8" fill="#111"/>
<circle cx="62.0" cy="91.3" r="1.8" fill="#111"/>
<circle cx="76.6" cy="91.3" r="1.8" fill="#111"/>
<circle cx="287.1" cy="91.3" r="1.8" fill="#111"/>
<polyline class="kd" points="0.0,113.0 366.4,113.0"/>
<polyline class="k" points="287.1,91.3 287.1,100.8"/>
<rect class="k" x="102.5" y="97.2" width="48.5" height="19.3"/>
<line class="kt" x1="127.7" y1="97.2" x2="127.7" y2="116.5"/>
<line class="kt" x1="106.0" y1="99.0" x2="122.0" y2="115.0"/>
<line class="kt" x1="122.0" y1="99.0" x2="106.0" y2="115.0"/>
<line class="kt" x1="133.5" y1="99.0" x2="133.5" y2="116.5"/>
<polygon points="132.0,99 133.5,96 135.0,99" fill="#111"/>
<line class="kt" x1="145.4" y1="99.0" x2="145.4" y2="116.5"/>
<polygon points="143.9,99 145.4,96 146.9,99" fill="#111"/>
<rect class="k" x="90.2" y="109.5" width="12.3" height="7.5"/>
<polygon points="91,110.2 97,113.2 91,116.2" fill="#111"/>
<polyline class="kt" points="151.0,98.0 152.6,105.0 154.2,98.0 155.8,105.0 157.4,98.0 159.0,105.0"/>
<line class="k" x1="82.5" y1="110.5" x2="87.5" y2="115.5"/>
<line class="k" x1="82.5" y1="115.5" x2="87.5" y2="110.5"/>
<rect class="k" x="36.0" y="104.6" width="12.5" height="24.7"/>
<rect class="kt" x="36.0" y="129.3" width="12.5" height="11.7"/>
<polygon points="38.25,141 42.25,133 46.25,141" fill="#111"/>
<polyline class="kt" points="38.0,92.0 39.6,102.0 41.2,92.0 42.8,102.0 44.4,92.0 46.0,102.0"/>
<line class="kt" x1="38.0" y1="110.0" x2="46.0" y2="120.0"/>
<line class="kt" x1="38.0" y1="124.0" x2="46.0" y2="124.0"/>
<rect class="k" x="67.5" y="104.6" width="12.5" height="24.7"/>
<rect class="kt" x="67.5" y="129.3" width="12.5" height="11.7"/>
<polygon points="69.75,141 73.75,133 77.75,141" fill="#111"/>
<polyline class="kt" points="69.5,92.0 71.1,102.0 72.7,92.0 74.3,102.0 75.9,92.0 77.5,102.0"/>
<line class="kt" x1="69.5" y1="110.0" x2="77.5" y2="120.0"/>
<line class="kt" x1="69.5" y1="124.0" x2="77.5" y2="124.0"/>
<polyline class="k" points="39.6,141.0 39.6,166.8"/>
<polyline class="k" points="71.6,141.0 71.6,166.8"/>
<polyline class="k" points="39.6,149.6 39.6,158.2"/>
<polyline class="k" points="71.6,149.6 71.6,158.2"/>
<line class="k" x1="51.0" y1="93.0" x2="55.0" y2="97.0"/>
<line class="k" x1="51.0" y1="97.0" x2="55.0" y2="93.0"/>
<rect class="k" x="601.0" y="49.3" width="39.3" height="20.1"/>
<line class="kt" x1="620.6" y1="49.3" x2="620.6" y2="69.4"/>
<rect class="kt" x="640.3" y="50.4" width="15.0" height="8.3"/>
<line class="kt" x1="645.3" y1="58.7" x2="652.3" y2="50.4"/>
<text x="594.0" y="62.3" font-size="10" fill="#111">W</text>
<line class="kt" x1="611.0" y1="49.3" x2="615.0" y2="67.4"/>
<polygon points="613.5,67.4 615,70.4 616.5,67.4" fill="#111"/>
<line class="kt" x1="604.0" y1="63.4" x2="608.0" y2="63.4"/>
<line class="kt" x1="606.0" y1="63.4" x2="606.0" y2="67.4"/>
<line class="kt" x1="625.6" y1="69.4" x2="630.6" y2="51.3"/>
<polygon points="629.1,51.3 630.6,48.3 632.1,51.3" fill="#111"/>
<line class="kt" x1="632.6" y1="63.4" x2="636.6" y2="63.4"/>
<line class="kt" x1="634.6" y1="63.4" x2="634.6" y2="67.4"/>
<rect class="k" x="601.0" y="135.5" width="39.3" height="20.1"/>
<line class="kt" x1="620.6" y1="135.5" x2="620.6" y2="155.6"/>
<rect class="kt" x="640.3" y="136.6" width="15.0" height="8.3"/>
<line class="kt" x1="645.3" y1="144.9" x2="652.3" y2="136.6"/>
<text x="594.0" y="148.5" font-size="10" fill="#111">W</text>
<line class="kt" x1="611.0" y1="135.5" x2="615.0" y2="153.6"/>
<polygon points="613.5,153.6 615,156.6 616.5,153.6" fill="#111"/>
<line class="kt" x1="604.0" y1="149.6" x2="608.0" y2="149.6"/>
<line class="kt" x1="606.0" y1="149.6" x2="606.0" y2="153.6"/>
<line class="kt" x1="625.6" y1="155.6" x2="630.6" y2="137.5"/>
<polygon points="629.1,137.5 630.6,134.5 632.1,137.5" fill="#111"/>
<line class="kt" x1="632.6" y1="149.6" x2="636.6" y2="149.6"/>
<line class="kt" x1="634.6" y1="149.6" x2="634.6" y2="153.6"/>
<rect class="k" x="712.0" y="49.3" width="39.3" height="20.1"/>
<line class="kt" x1="731.6" y1="49.3" x2="731.6" y2="69.4"/>
<rect class="kt" x="751.3" y="50.4" width="15.0" height="8.3"/>
<line class="kt" x1="756.3" y1="58.7" x2="763.3" y2="50.4"/>
<text x="705.0" y="62.3" font-size="10" fill="#111">W</text>
<line class="kt" x1="717.0" y1="51.3" x2="727.0" y2="67.4"/>
<line class="kt" x1="727.0" y1="51.3" x2="717.0" y2="67.4"/>
<line class="kt" x1="737.6" y1="52.3" x2="737.6" y2="67.4"/>
<polygon points="736.1,67.4 737.6,70.4 739.1,67.4" fill="#111"/>
<line class="kt" x1="744.6" y1="52.3" x2="744.6" y2="69.4"/>
<polygon points="743.1,52.3 744.6,49.3 746.1,52.3" fill="#111"/>
<polyline class="k" points="685.1,0.0 685.1,179.2 593.7,179.2"/>
<circle cx="685.1" cy="20.2" r="2.2" fill="#111"/>
<circle cx="685.1" cy="64.3" r="2.2" fill="#111"/>
<circle cx="685.1" cy="81.1" r="2.2" fill="#111"/>
<circle cx="685.1" cy="93.6" r="2.2" fill="#111"/>
<circle cx="685.1" cy="179.2" r="2.2" fill="#111"/>
<polyline class="k" points="606.5,69.4 606.5,93.6 685.1,93.6"/>
<circle cx="673.3" cy="93.6" r="2" fill="#eaa35c"/>
<polyline class="k" points="616.1,69.4 616.1,81.1 685.1,81.1"/>
<circle cx="616.1" cy="81.1" r="2.2" fill="#111"/>
<circle cx="648.2" cy="81.1" r="2.2" fill="#111"/>
<polyline class="kd" points="593.7,65.0 593.7,81.1 616.0,81.1"/>
<polyline class="kd" points="648.2,65.0 648.2,81.1"/>
<polyline class="kd" points="685.1,93.6 758.4,93.6 758.4,65.0 751.6,65.0"/>
<polyline class="kd" points="685.1,64.3 712.0,64.3"/>
<polyline class="k" points="685.1,20.2 725.9,20.2 725.9,49.3"/>
<polyline class="k" points="716.9,69.4 716.9,118.3 795.8,118.3"/>
<polyline class="kd" points="795.8,118.3 823.3,118.3"/>
<polyline class="k" points="606.5,155.0 606.5,179.2"/>
<circle cx="606.5" cy="179.2" r="2.2" fill="#111"/>
<circle cx="648.2" cy="179.2" r="2.2" fill="#111"/>
<polyline class="kd" points="593.7,150.0 593.7,179.2"/>
<polyline class="kd" points="648.2,150.0 648.2,179.2"/>
<circle cx="717.0" cy="7.8" r="2" fill="#eaa35c"/>
<rect class="k" x="944.4" y="421.0" width="59.2" height="19.8"/>
<line class="kt" x1="964.2" y1="421.0" x2="964.2" y2="440.8"/>
<line class="kt" x1="983.9" y1="421.0" x2="983.9" y2="440.8"/>
<line class="kt" x1="944.4" y1="419.0" x2="1003.6" y2="419.0"/>
<line class="kt" x1="944.4" y1="442.9" x2="1003.6" y2="442.9"/>
<line class="kt" x1="947.0" y1="426.0" x2="951.0" y2="426.0"/>
<line class="kt" x1="949.0" y1="426.0" x2="949.0" y2="430.0"/>
<line class="kt" x1="966.0" y1="426.0" x2="970.0" y2="426.0"/>
<line class="kt" x1="968.0" y1="426.0" x2="968.0" y2="430.0"/>
<line class="kt" x1="976.5" y1="426.0" x2="980.5" y2="426.0"/>
<line class="kt" x1="978.5" y1="426.0" x2="978.5" y2="430.0"/>
<line class="kt" x1="996.0" y1="426.0" x2="1000.0" y2="426.0"/>
<line class="kt" x1="998.0" y1="426.0" x2="998.0" y2="430.0"/>
<line class="kt" x1="973.8" y1="434.5" x2="973.8" y2="440.8"/>
<line class="kt" x1="971.0" y1="434.5" x2="976.6" y2="434.5"/>
<line class="kt" x1="958.5" y1="421.0" x2="953.0" y2="439.0"/>
<polygon points="951.5,440 953,443 954.5,440" fill="#111"/>
<line class="kt" x1="993.5" y1="440.8" x2="988.0" y2="422.0"/>
<polygon points="986.5,421 988,418 989.5,421" fill="#111"/>
<text x="1008.0" y="436.0" font-size="10" fill="#111" text-anchor="middle">W</text>
<rect class="kt" x="935.3" y="397.5" width="2.5" height="30.5"/>
<rect class="kt" x="935.3" y="433.0" width="2.5" height="29.0"/>
<line class="kt" x1="937.8" y1="424.0" x2="944.4" y2="424.0"/>
<line class="kt" x1="937.8" y1="436.8" x2="944.4" y2="436.8"/>
<rect class="kt" x="898.7" y="397.5" width="7.8" height="15.0"/>
<rect class="kt" x="911.0" y="397.5" width="7.5" height="15.0"/>
<rect class="kt" x="923.0" y="397.5" width="11.7" height="15.0"/>
<line class="kt" x1="902.5" y1="405.0" x2="923.0" y2="405.0"/>
<rect class="kt" x="907.6" y="450.4" width="14.9" height="11.9"/>
<rect class="kt" x="922.5" y="451.3" width="12.2" height="10.5" rx="3"/>
<text x="942.5" y="408" font-size="10" fill="#111" text-anchor="middle">W</text>
<text x="942.5" y="460" font-size="10" fill="#111" text-anchor="middle">W</text>
<polyline class="kt" points="953.8,405.0 953.8,410.3 964.7,410.3 964.7,405.0"/>
<polyline class="kt" points="959.0,410.3 959.0,397.5 968.9,397.5 968.9,419.0"/>
<line class="k" x1="978.5" y1="387.7" x2="978.5" y2="419.0"/>
<line class="k" x1="974.0" y1="442.9" x2="974.0" y2="499.4"/>
<line class="k" x1="999.2" y1="440.8" x2="999.2" y2="511.1"/>
<polygon points="995.7,442 999.2,449 1002.7,442" fill="#111"/>
<line class="k" x1="1031.4" y1="387.7" x2="1031.4" y2="499.4"/>
<line class="k" x1="927.0" y1="387.7" x2="927.0" y2="397.7"/>
<rect class="kt" x="962.9" y="499.4" width="73.6" height="23.8"/>
<polyline class="kt" points="968.0,503.0 990.0,503.0 990.0,507.0 1030.0,507.0 1030.0,515.0 990.0,515.0 990.0,519.0 968.0,519.0 968.0,503.0"/>
<polyline class="kt" points="1014.0,499.4 1014.0,523.2"/>
<line class="k" x1="999.2" y1="511.1" x2="1075.2" y2="587.1"/>
<circle cx="999.2" cy="511.1" r="1.8" fill="#111"/>
<rect class="k" x="1249.4" y="421.0" width="59.2" height="19.8"/>
<line class="kt" x1="1269.1" y1="421.0" x2="1269.1" y2="440.8"/>
<line class="kt" x1="1288.8" y1="421.0" x2="1288.8" y2="440.8"/>
<line class="kt" x1="1249.4" y1="419.0" x2="1308.6" y2="419.0"/>
<line class="kt" x1="1249.4" y1="442.9" x2="1308.6" y2="442.9"/>
<line class="kt" x1="1302.0" y1="426.0" x2="1306.0" y2="426.0"/>
<line class="kt" x1="1304.0" y1="426.0" x2="1304.0" y2="430.0"/>
<line class="kt" x1="1283.0" y1="426.0" x2="1287.0" y2="426.0"/>
<line class="kt" x1="1285.0" y1="426.0" x2="1285.0" y2="430.0"/>
<line class="kt" x1="1272.5" y1="426.0" x2="1276.5" y2="426.0"/>
<line class="kt" x1="1274.5" y1="426.0" x2="1274.5" y2="430.0"/>
<line class="kt" x1="1253.0" y1="426.0" x2="1257.0" y2="426.0"/>
<line class="kt" x1="1255.0" y1="426.0" x2="1255.0" y2="430.0"/>
<line class="kt" x1="1279.2" y1="434.5" x2="1279.2" y2="440.8"/>
<line class="kt" x1="1282.0" y1="434.5" x2="1276.4" y2="434.5"/>
<line class="kt" x1="1294.5" y1="421.0" x2="1300.0" y2="439.0"/>
<polygon points="1298.5,440 1300.0,443 1301.5,440" fill="#111"/>
<line class="kt" x1="1259.5" y1="440.8" x2="1265.0" y2="422.0"/>
<polygon points="1263.5,421 1265.0,418 1266.5,421" fill="#111"/>
<text x="1245.0" y="436.0" font-size="10" fill="#111" text-anchor="middle">W</text>
<rect class="kt" x="1315.2" y="397.5" width="2.5" height="30.5"/>
<rect class="kt" x="1315.2" y="433.0" width="2.5" height="29.0"/>
<line class="kt" x1="1315.2" y1="424.0" x2="1308.6" y2="424.0"/>
<line class="kt" x1="1315.2" y1="436.8" x2="1308.6" y2="436.8"/>
<rect class="kt" x="1346.5" y="397.5" width="7.8" height="15.0"/>
<rect class="kt" x="1334.5" y="397.5" width="7.5" height="15.0"/>
<rect class="kt" x="1318.3" y="397.5" width="11.7" height="15.0"/>
<line class="kt" x1="1350.5" y1="405.0" x2="1330.0" y2="405.0"/>
<rect class="kt" x="1330.5" y="450.4" width="14.9" height="11.9"/>
<rect class="kt" x="1318.3" y="451.3" width="12.2" height="10.5" rx="3"/>
<text x="1310.5" y="408" font-size="10" fill="#111" text-anchor="middle">W</text>
<text x="1310.5" y="460" font-size="10" fill="#111" text-anchor="middle">W</text>
<polyline class="kt" points="1299.2,405.0 1299.2,410.3 1288.3,410.3 1288.3,405.0"/>
<polyline class="kt" points="1294.0,410.3 1294.0,397.5 1284.1,397.5 1284.1,419.0"/>
<line class="k" x1="1274.5" y1="387.7" x2="1274.5" y2="419.0"/>
<line class="k" x1="1279.0" y1="442.9" x2="1279.0" y2="499.4"/>
<line class="k" x1="1253.8" y1="440.8" x2="1253.8" y2="511.1"/>
<polygon points="1250.3,442 1253.8,449 1257.3,442" fill="#111"/>
<line class="k" x1="1221.6" y1="387.7" x2="1221.6" y2="499.4"/>
<line class="k" x1="1326.0" y1="387.7" x2="1326.0" y2="397.7"/>
<rect class="kt" x="1216.5" y="499.4" width="73.6" height="23.8"/>
<polyline class="kt" points="1285.0,503.0 1263.0,503.0 1263.0,507.0 1223.0,507.0 1223.0,515.0 1263.0,515.0 1263.0,519.0 1285.0,519.0 1285.0,503.0"/>
<polyline class="kt" points="1239.0,499.4 1239.0,523.2"/>
<line class="k" x1="1253.8" y1="511.1" x2="1177.8" y2="587.1"/>
<circle cx="1253.8" cy="511.1" r="1.8" fill="#111"/>
<line class="k" x1="927.0" y1="387.7" x2="1058.0" y2="387.7"/>
<polyline class="k" points="862.5,422.3 862.5,431.9 915.4,431.9 915.4,450.4"/>
<line class="k" x1="859.0" y1="418.8" x2="866.0" y2="425.8"/>
<line class="k" x1="859.0" y1="425.8" x2="866.0" y2="418.8"/>
<polyline class="k" points="813.7,456.0 907.6,456.0"/>
<polyline class="k" points="1390.4,431.3 1337.6,431.3 1337.6,450.4"/>
<polyline class="k" points="1345.4,456.6 1439.5,456.6"/>
<polyline class="k" points="813.7,446.6 813.7,492.7"/>
<polygon points="813.7,449 818,453 818,459 813.7,463 809.4,459 809.4,453" fill="#fff" stroke="#222" stroke-width="1"/>
<circle cx="813.7" cy="456" r="2.2" fill="#fff" stroke="#222" stroke-width="1.2"/>
<rect class="k" x="803.0" y="492.7" width="20.3" height="19.5"/>
<line class="kt" x1="808.0" y1="510.0" x2="816.0" y2="494.0"/>
<polygon points="814.5,494 816,491 817.5,494" fill="#111"/>
<line class="kt" x1="816.0" y1="502.0" x2="820.0" y2="502.0"/>
<line class="kt" x1="818.0" y1="502.0" x2="818.0" y2="506.0"/>
<rect class="kt" x="788.0" y="497.0" width="15.0" height="12.0"/>
<line class="kt" x1="790.0" y1="492.0" x2="802.0" y2="514.0"/>
<line class="kt" x1="790.0" y1="514.0" x2="802.0" y2="492.0"/>
<text x="831" y="509" font-size="10" fill="#111" text-anchor="middle">W</text>
<polyline class="kt" points="805.0,525.0 805.0,541.0 815.0,541.0 815.0,525.0"/>
<line class="kt" x1="808.0" y1="512.2" x2="808.0" y2="533.0"/>
<polyline class="kt" points="822.0,484.0 826.0,484.0 826.0,492.0"/>
<polygon points="1439.5,449 1443.8,453 1443.8,459 1439.5,463 1435.2,459 1435.2,453" fill="#fff" stroke="#222" stroke-width="1"/>
<circle cx="1439.5" cy="456.6" r="2.2" fill="#fff" stroke="#222" stroke-width="1.2"/>
<polyline class="k" points="1439.5,463.0 1439.5,507.6"/>
<line x1="874.7" y1="568.6" x2="1261.5" y2="568.6" stroke="#222" stroke-width="1.1"/><line x1="874.7" y1="571.3" x2="1261.5" y2="571.3" stroke="#222" stroke-width="1.1"/>
<circle cx="1058.2" cy="570" r="12" fill="#fff" stroke="#222" stroke-width="1.5"/>
<polygon points="1054.7,566 1058.2,559 1061.7,566" fill="#111"/>
<circle cx="1194.4" cy="570" r="12" fill="#fff" stroke="#222" stroke-width="1.5"/>
<polygon points="1190.9,566 1194.4,559 1197.9,566" fill="#111"/>
<line class="k" x1="999.2" y1="511.1" x2="1075.2" y2="587.1"/>
<line class="k" x1="1253.8" y1="511.1" x2="1177.8" y2="587.1"/>
<circle cx="1268.6" cy="570" r="7.1" fill="#fff" stroke="#222" stroke-width="1.4"/>
<polygon points="1266.6,568 1268.6,564 1270.6,568" fill="#111"/>
<line class="k" x1="1126.3" y1="542.2" x2="1126.3" y2="720.0"/>
<line class="k" x1="1120.0" y1="542.2" x2="1133.0" y2="542.2"/>
<line class="k" x1="1120.0" y1="720.0" x2="1133.0" y2="720.0"/>
<line class="k" x1="1120.0" y1="675.0" x2="1133.0" y2="675.0"/>
<line class="k" x1="1120.0" y1="678.0" x2="1133.0" y2="678.0"/>
<line class="k" x1="1118.0" y1="598.0" x2="1135.0" y2="598.0"/>
<line class="k" x1="1118.0" y1="601.0" x2="1135.0" y2="601.0"/>
<circle cx="1175.3" cy="699.5" r="7" fill="#fff" stroke="#222" stroke-width="1.4"/>
<polygon points="1173.3,697 1175.3,693 1177.3,697" fill="#111"/>
<line x1="1126.3" y1="698" x2="1168.3" y2="698" stroke="#222" stroke-width="1"/><line x1="1126.3" y1="701" x2="1168.3" y2="701" stroke="#222" stroke-width="1"/>
<polyline class="k" points="1175.3,692.5 1175.3,681.8 1232.0,681.8"/>
<line class="k" x1="1175.3" y1="706.5" x2="1175.3" y2="744.6"/>
<polyline class="bx" points="1197.7,654.0 1366.4,654.0"/>
<path d="M1047,583 Q1040,592 1045.8,611.7" class="kd"/><path d="M1206,583 Q1213,592 1207.3,611.7" class="kd"/>
<circle cx="1045.8" cy="611.7" r="1.8" fill="#111"/>
<circle cx="1207.3" cy="611.7" r="1.8" fill="#111"/>
<line class="k" x1="1268.6" y1="577.0" x2="1268.6" y2="611.7"/>
<rect class="k" x="1307.3" y="578.7" width="19.9" height="19.9"/>
<line class="kt" x1="1317.2" y1="580.0" x2="1317.2" y2="597.0"/>
<polygon points="1315.7,597 1317.2,600 1318.7,597" fill="#111"/>
<polygon class="kt" points="1317.2,555 1323.2,561 1317.2,567 1311.2,561"/>
<line class="kt" x1="1312.0" y1="561.0" x2="1322.0" y2="561.0"/>
<polyline class="k" points="1317.2,545.3 1317.2,555.0"/>
<polyline class="k" points="1317.2,567.0 1317.2,578.7"/>
<polyline class="kd" points="1307.0,569.0 1300.0,569.0 1300.0,589.0 1307.0,589.0"/>
<text x="1333" y="593" font-size="10" fill="#111" text-anchor="middle">W</text>
<polyline class="k" points="1341.7,545.4 1341.7,570.0 1366.4,570.0"/>
<line class="k" x1="1363.4" y1="567.0" x2="1369.4" y2="573.0"/>
<line class="k" x1="1363.4" y1="573.0" x2="1369.4" y2="567.0"/>
<circle cx="1317.2" cy="545.4" r="2" fill="#eaa35c"/>
<circle cx="1341.7" cy="545.4" r="2" fill="#eaa35c"/>
<rect class="k" x="1000.7" y="287.7" width="17.5" height="16.8"/>
<line class="kt" x1="1000.7" y1="304.5" x2="1018.2" y2="287.7"/>
<polygon points="1006.45,304.5 1009.45,298.5 1012.45,304.5" fill="#111"/>
<polyline class="kt" points="1004.7,296.7 1006.7,291.7 1008.7,295.7 1010.7,290.7"/>
<rect class="k" x="1230.5" y="287.5" width="16.8" height="16.8"/>
<line class="kt" x1="1230.5" y1="304.3" x2="1247.3" y2="287.5"/>
<polygon points="1235.9,304.3 1238.9,298.3 1241.9,304.3" fill="#111"/>
<polyline class="kt" points="1234.5,296.5 1236.5,291.5 1238.5,295.5 1240.5,290.5"/>
<rect class="k" x="1379.5" y="355.8" width="17.7" height="17.4"/>
<line class="kt" x1="1379.5" y1="373.2" x2="1397.2" y2="355.8"/>
<polygon points="1385.35,373.2 1388.35,367.2 1391.35,373.2" fill="#111"/>
<polyline class="kt" points="1383.5,364.8 1385.5,359.8 1387.5,363.8 1389.5,358.8"/>
<rect class="k" x="1111.3" y="302.6" width="19.9" height="19.2"/>
<line class="kt" x1="1112.5" y1="307.0" x2="1130.0" y2="311.5"/>
<polygon points="1130,310.0 1133,311.5 1130,313.0" fill="#111"/>
<polygon points="1113,305.5 1110,307 1113,308.5" fill="#111"/>
<line class="kt" x1="1131.2" y1="311.0" x2="1137.0" y2="305.0"/>
<line class="kt" x1="1113.0" y1="300.0" x2="1129.0" y2="291.0"/>
<line class="kt" x1="1117.0" y1="291.0" x2="1126.0" y2="302.6"/>
<line class="kt" x1="1110.0" y1="299.0" x2="1133.0" y2="287.0"/>
<polyline class="kt" points="1118.5,302.6 1118.5,297.0 1128.0,297.0"/>
<polyline class="kt" points="1129.0,297.0 1136.0,297.0 1136.0,300.0"/>
<line class="kt" x1="1141.0" y1="297.0" x2="1141.0" y2="302.0"/>
<polyline class="kt" points="1097.0,331.0 1097.0,336.5 1107.5,336.5 1107.5,331.0"/>
<polyline class="kt" points="1102.0,336.5 1102.0,316.6 1117.0,316.6"/>
<line class="kt" x1="1117.0" y1="313.5" x2="1117.0" y2="319.5"/>
<polyline class="kt" points="1119.0,323.0 1125.0,325.0 1119.0,327.0 1125.0,329.0 1119.0,331.0"/>
<rect x="1370.4" y="96" width="17" height="34.4" rx="8.5" fill="#fff" stroke="#333" stroke-width="1.3"/>
<line class="k" x1="1379.0" y1="130.4" x2="1379.0" y2="169.5"/>
<circle cx="1401.5" cy="169.5" r="5" fill="#fff" stroke="#d6a16a" stroke-width="1.3"/>
<polyline class="o" points="1401.0,162.5 1408.0,169.5 1401.0,176.5"/>
<line class="k" x1="1427.2" y1="169.5" x2="1427.2" y2="249.8"/>
<line class="k" x1="1423.7" y1="246.3" x2="1430.7" y2="253.3"/>
<line class="k" x1="1423.7" y1="253.3" x2="1430.7" y2="246.3"/>
<polygon class="k" points="1513,157.5 1525,169.5 1513,181.5 1501,169.5"/>
<line x1="1513" y1="158" x2="1513" y2="181" stroke="#222" stroke-width="1" stroke-dasharray="3 2"/>
<rect class="k" x="1505.3" y="194.8" width="17.8" height="16.9"/>
<polyline class="kt" points="1509.0,186.0 1510.8,193.0 1512.6,186.0 1514.4,193.0 1516.2,186.0 1518.0,193.0"/>
<line class="kt" x1="1508.0" y1="204.0" x2="1520.0" y2="204.0"/>
<polygon points="1508,202.5 1505,204 1508,205.5" fill="#111"/>
<polyline class="k" points="1486.2,169.5 1486.2,203.2 1505.3,203.2"/>
<polyline class="k" points="1539.8,169.5 1539.8,203.2 1523.1,203.2"/>
<circle cx="1531.0" cy="203.2" r="1.8" fill="#111"/>
<polyline class="kd" points="1515.0,211.7 1515.0,220.0 1532.0,220.0 1532.0,211.0"/>
<circle cx="1379.0" cy="169.5" r="2" fill="#eaa35c"/>
<circle cx="1427.2" cy="169.5" r="2" fill="#eaa35c"/>
<circle cx="1451.7" cy="169.5" r="2" fill="#eaa35c"/>
<circle cx="1486.2" cy="169.5" r="2" fill="#eaa35c"/>
<circle cx="1539.8" cy="169.5" r="2" fill="#eaa35c"/>
<circle cx="107.8" cy="474.7" r="3.6" fill="#fff" stroke="#222" stroke-width="1.1"/>
<line class="kt" x1="106.5" y1="478.3" x2="106.5" y2="524.0"/>
<line class="kt" x1="109.1" y1="478.3" x2="109.1" y2="524.0"/>
<line class="kt" x1="98.8" y1="513.0" x2="116.8" y2="504.0"/>
<polygon points="99.3,533 116.3,533 107.8,523" fill="#fff" stroke="#222" stroke-width="1.1"/>
<circle cx="107.8" cy="528.5" r="2" fill="#fff" stroke="#222" stroke-width="1"/>
<circle cx="254.2" cy="474.7" r="3.6" fill="#fff" stroke="#222" stroke-width="1.1"/>
<line class="kt" x1="252.9" y1="478.3" x2="252.9" y2="524.0"/>
<line class="kt" x1="255.5" y1="478.3" x2="255.5" y2="524.0"/>
<line class="kt" x1="245.2" y1="504.0" x2="263.2" y2="513.0"/>
<polygon points="245.7,533 262.7,533 254.2,523" fill="#fff" stroke="#222" stroke-width="1.1"/>
<circle cx="254.2" cy="528.5" r="2" fill="#fff" stroke="#222" stroke-width="1"/>
<polyline class="k" points="66.3,536.0 66.3,523.5 149.3,523.5 149.3,536.0"/>
<line class="kt" x1="74.6" y1="535.6" x2="74.6" y2="562.0"/>
<line class="kt" x1="82.0" y1="535.6" x2="82.0" y2="562.0"/>
<line class="kt" x1="79.5" y1="562.0" x2="85.0" y2="562.0"/>
<line class="k" x1="47.7" y1="535.6" x2="84.6" y2="535.6"/>
<line class="kt" x1="51.5" y1="535.6" x2="51.5" y2="576.5"/>
<rect class="kt" x="47.3" y="541.8" width="8.4" height="15.8"/>
<polyline class="kt" points="48.0,549.0 55.0,552.0 48.0,555.0 55.0,558.0"/>
<polyline class="kt" points="55.7,545.6 62.7,545.6"/>
<polyline class="kd" points="62.7,548.0 62.7,581.5 46.2,581.5 46.2,577.4"/>
<circle cx="62.7" cy="562.0" r="1.8" fill="#111"/>
<polyline class="kt" points="51.5,562.0 41.8,562.0 41.8,576.5 51.5,576.5"/>
<polygon points="41.5,566.6 44.5,569.6 41.5,572.6 38.5,569.6" fill="#fff" stroke="#222" stroke-width="1"/>
<line class="kt" x1="50.0" y1="566.0" x2="53.0" y2="573.0"/>
<line class="kt" x1="53.0" y1="566.0" x2="50.0" y2="573.0"/>
<rect class="k" x="68.3" y="576.5" width="20.2" height="20.0"/>
<polyline class="kt" points="76.0,576.0 81.0,574.0 76.0,572.0 81.0,570.0 77.0,568.0"/>
<polyline class="kt" points="79.0,598.0 87.0,600.0 79.0,602.0 87.0,604.0 80.0,605.5"/>
<line class="kt" x1="69.5" y1="587.5" x2="88.0" y2="581.5"/>
<polygon points="88.0,580.0 91.0,581.5 88.0,583.0" fill="#111"/>
<path class="kt" d="M69.5,587.5 Q63.5,591 63.5,598"/>
<line class="kt" x1="82.0" y1="590.0" x2="86.5" y2="590.0"/>
<line class="kt" x1="84.0" y1="590.0" x2="84.0" y2="596.5"/>
<polyline class="kd" points="63.3,599.0 63.3,605.8 71.7,605.8"/>
<line class="kt" x1="73.5" y1="596.5" x2="73.5" y2="604.0"/>
<line class="kt" x1="141.0" y1="535.6" x2="141.0" y2="562.0"/>
<line class="kt" x1="133.6" y1="535.6" x2="133.6" y2="562.0"/>
<line class="kt" x1="136.1" y1="562.0" x2="130.6" y2="562.0"/>
<line class="k" x1="167.9" y1="535.6" x2="131.0" y2="535.6"/>
<line class="kt" x1="164.1" y1="535.6" x2="164.1" y2="576.5"/>
<rect class="kt" x="159.9" y="541.8" width="8.4" height="15.8"/>
<polyline class="kt" points="167.6,549.0 160.6,552.0 167.6,555.0 160.6,558.0"/>
<polyline class="kt" points="159.9,545.6 152.9,545.6"/>
<polyline class="kd" points="152.9,548.0 152.9,581.5 169.4,581.5 169.4,577.4"/>
<circle cx="152.9" cy="562.0" r="1.8" fill="#111"/>
<polyline class="kt" points="164.1,562.0 173.8,562.0 173.8,576.5 164.1,576.5"/>
<polygon points="174.1,566.6 171.1,569.6 174.1,572.6 177.1,569.6" fill="#fff" stroke="#222" stroke-width="1"/>
<line class="kt" x1="165.6" y1="566.0" x2="162.6" y2="573.0"/>
<line class="kt" x1="162.6" y1="566.0" x2="165.6" y2="573.0"/>
<rect class="k" x="127.1" y="576.5" width="20.2" height="20.0"/>
<polyline class="kt" points="139.6,576.0 134.6,574.0 139.6,572.0 134.6,570.0 138.6,568.0"/>
<polyline class="kt" points="136.6,598.0 128.6,600.0 136.6,602.0 128.6,604.0 135.6,605.5"/>
<line class="kt" x1="146.1" y1="587.5" x2="127.6" y2="581.5"/>
<polygon points="127.6,580.0 124.6,581.5 127.6,583.0" fill="#111"/>
<path class="kt" d="M146.1,587.5 Q152.1,591 152.1,598"/>
<line class="kt" x1="133.6" y1="590.0" x2="129.1" y2="590.0"/>
<line class="kt" x1="131.6" y1="590.0" x2="131.6" y2="596.5"/>
<polyline class="kd" points="152.3,599.0 152.3,605.8 143.9,605.8"/>
<line class="kt" x1="142.1" y1="596.5" x2="142.1" y2="604.0"/>
<polyline class="kd" points="62.7,562.0 152.9,562.0"/>
<polyline class="k" points="212.7,536.0 212.7,523.5 295.7,523.5 295.7,536.0"/>
<line class="kt" x1="221.0" y1="535.6" x2="221.0" y2="562.0"/>
<line class="kt" x1="228.4" y1="535.6" x2="228.4" y2="562.0"/>
<line class="kt" x1="225.9" y1="562.0" x2="231.4" y2="562.0"/>
<line class="k" x1="194.1" y1="535.6" x2="231.0" y2="535.6"/>
<line class="kt" x1="197.9" y1="535.6" x2="197.9" y2="576.5"/>
<rect class="kt" x="193.7" y="541.8" width="8.4" height="15.8"/>
<polyline class="kt" points="194.4,549.0 201.4,552.0 194.4,555.0 201.4,558.0"/>
<polyline class="kt" points="202.1,545.6 209.1,545.6"/>
<polyline class="kd" points="209.1,548.0 209.1,581.5 192.6,581.5 192.6,577.4"/>
<circle cx="209.1" cy="562.0" r="1.8" fill="#111"/>
<polyline class="kt" points="197.9,562.0 188.2,562.0 188.2,576.5 197.9,576.5"/>
<polygon points="187.89999999999998,566.6 190.89999999999998,569.6 187.89999999999998,572.6 184.89999999999998,569.6" fill="#fff" stroke="#222" stroke-width="1"/>
<line class="kt" x1="196.4" y1="566.0" x2="199.4" y2="573.0"/>
<line class="kt" x1="199.4" y1="566.0" x2="196.4" y2="573.0"/>
<rect class="k" x="214.7" y="576.5" width="20.2" height="20.0"/>
<polyline class="kt" points="222.4,576.0 227.4,574.0 222.4,572.0 227.4,570.0 223.4,568.0"/>
<polyline class="kt" points="225.4,598.0 233.4,600.0 225.4,602.0 233.4,604.0 226.4,605.5"/>
<line class="kt" x1="215.9" y1="587.5" x2="234.4" y2="581.5"/>
<polygon points="234.39999999999998,580.0 237.39999999999998,581.5 234.39999999999998,583.0" fill="#111"/>
<path class="kt" d="M215.89999999999998,587.5 Q209.89999999999998,591 209.89999999999998,598"/>
<line class="kt" x1="228.4" y1="590.0" x2="232.9" y2="590.0"/>
<line class="kt" x1="230.4" y1="590.0" x2="230.4" y2="596.5"/>
<polyline class="kd" points="209.7,599.0 209.7,605.8 218.1,605.8"/>
<line class="kt" x1="219.9" y1="596.5" x2="219.9" y2="604.0"/>
<line class="kt" x1="287.4" y1="535.6" x2="287.4" y2="562.0"/>
<line class="kt" x1="280.0" y1="535.6" x2="280.0" y2="562.0"/>
<line class="kt" x1="282.5" y1="562.0" x2="277.0" y2="562.0"/>
<line class="k" x1="314.3" y1="535.6" x2="277.4" y2="535.6"/>
<line class="kt" x1="310.5" y1="535.6" x2="310.5" y2="576.5"/>
<rect class="kt" x="306.3" y="541.8" width="8.4" height="15.8"/>
<polyline class="kt" points="314.0,549.0 307.0,552.0 314.0,555.0 307.0,558.0"/>
<polyline class="kt" points="306.3,545.6 299.3,545.6"/>
<polyline class="kd" points="299.3,548.0 299.3,581.5 315.8,581.5 315.8,577.4"/>
<circle cx="299.3" cy="562.0" r="1.8" fill="#111"/>
<polyline class="kt" points="310.5,562.0 320.2,562.0 320.2,576.5 310.5,576.5"/>
<polygon points="320.5,566.6 317.5,569.6 320.5,572.6 323.5,569.6" fill="#fff" stroke="#222" stroke-width="1"/>
<line class="kt" x1="312.0" y1="566.0" x2="309.0" y2="573.0"/>
<line class="kt" x1="309.0" y1="566.0" x2="312.0" y2="573.0"/>
<rect class="k" x="273.5" y="576.5" width="20.2" height="20.0"/>
<polyline class="kt" points="286.0,576.0 281.0,574.0 286.0,572.0 281.0,570.0 285.0,568.0"/>
<polyline class="kt" points="283.0,598.0 275.0,600.0 283.0,602.0 275.0,604.0 282.0,605.5"/>
<line class="kt" x1="292.5" y1="587.5" x2="274.0" y2="581.5"/>
<polygon points="274.0,580.0 271.0,581.5 274.0,583.0" fill="#111"/>
<path class="kt" d="M292.5,587.5 Q298.5,591 298.5,598"/>
<line class="kt" x1="280.0" y1="590.0" x2="275.5" y2="590.0"/>
<line class="kt" x1="278.0" y1="590.0" x2="278.0" y2="596.5"/>
<polyline class="kd" points="298.7,599.0 298.7,605.8 290.3,605.8"/>
<line class="kt" x1="288.5" y1="596.5" x2="288.5" y2="604.0"/>
<polyline class="kd" points="209.1,562.0 299.3,562.0"/>
<polyline class="k" points="68.5,586.6 58.7,586.6 58.7,640.2"/>
<line class="kd" x1="58.7" y1="640.2" x2="58.7" y2="687.0"/>
<polyline class="k" points="147.6,586.6 156.7,586.6 156.7,640.2"/>
<line class="kd" x1="156.7" y1="640.2" x2="156.7" y2="687.0"/>
<polyline class="k" points="215.6,586.6 205.6,586.6 205.6,640.2"/>
<line class="kd" x1="205.6" y1="640.2" x2="205.6" y2="687.0"/>
<polyline class="k" points="294.0,586.6 303.5,586.6 303.5,640.2"/>
<line class="kd" x1="303.5" y1="640.2" x2="303.5" y2="687.0"/>
<polyline class="g" points="88.4,581.5 127.6,581.5"/>
<polyline class="g" points="117.5,581.5 117.5,616.0 244.6,616.0 244.6,581.5"/>
<polyline class="g" points="235.0,581.5 274.4,581.5"/>
<circle cx="117.5" cy="581.5" r="2" fill="#2e9e6e"/>
<circle cx="244.6" cy="581.5" r="2" fill="#2e9e6e"/>
<circle cx="244.6" cy="616.0" r="2" fill="#2e9e6e"/>
<polyline class="g" points="244.6,616.0 244.6,640.2"/>
<polyline class="gd" points="244.6,640.2 244.6,788.0 0.0,788.0"/>
<polyline class="o" points="88.4,591.1 127.6,591.1"/>
<polyline class="o" points="98.0,591.1 98.0,627.8 264.3,627.8 264.3,591.1 235.0,591.1"/>
<circle cx="98.0" cy="591.1" r="2" fill="#eaa35c"/>
<circle cx="98.0" cy="627.8" r="2" fill="#eaa35c"/>
<circle cx="264.3" cy="591.1" r="2" fill="#eaa35c"/>
<polyline class="o" points="98.0,627.8 98.0,836.8 0.0,836.8"/>
<rect class="kt" x="91.4" y="640.2" width="13.2" height="20.6"/>
<polygon class="kt" points="98,645.5 103,650.5 98,655.5 93,650.5"/>
<polyline class="k" points="1151.0,270.4 1151.0,312.0"/>
<polyline class="o" points="1151.0,312.0 1151.0,358.7"/>
<line class="k" x1="1147.5" y1="266.9" x2="1154.5" y2="273.9"/>
<line class="k" x1="1147.5" y1="273.9" x2="1154.5" y2="266.9"/>
<circle cx="1151.0" cy="312.0" r="2" fill="#eaa35c"/>
<rect x="74.5" y="40.8" width="7.8" height="2.4" fill="#fff"/>
<path class="k" d="M74.8,42.0 A3.6,3.6 0 0 1 82.0,42.0" style="stroke-dasharray:none"/>
<line x1="78.4" y1="40.5" x2="78.4" y2="43.5" stroke="#333" stroke-width="1.3"/>
<rect x="141.5" y="4.1" width="7.8" height="2.4" fill="#fff"/>
<path class="k" d="M141.8,5.3 A3.6,3.6 0 0 1 149.0,5.3" style="stroke-dasharray:none"/>
<line x1="145.4" y1="3.8" x2="145.4" y2="6.8" stroke="#222" stroke-width="1.3"/>
<rect x="13.1" y="78.1" width="7.8" height="2.4" fill="#fff"/>
<path class="k" d="M13.4,79.3 A3.6,3.6 0 0 1 20.6,79.3" style="stroke-dasharray:none"/>
<line x1="17.0" y1="77.8" x2="17.0" y2="80.8" stroke="#222" stroke-width="1.3"/>
<rect x="35.7" y="148.4" width="7.8" height="2.4" fill="#fff"/>
<path class="k" d="M36.0,149.6 A3.6,3.6 0 0 1 43.2,149.6" style="stroke-dasharray:none"/>
<line x1="39.6" y1="148.1" x2="39.6" y2="151.1" stroke="#222" stroke-width="1.3"/>
<rect x="67.7" y="148.4" width="7.8" height="2.4" fill="#fff"/>
<path class="k" d="M68.0,149.6 A3.6,3.6 0 0 1 75.2,149.6" style="stroke-dasharray:none"/>
<line x1="71.6" y1="148.1" x2="71.6" y2="151.1" stroke="#222" stroke-width="1.3"/>
<rect x="129.6" y="148.4" width="7.8" height="2.4" fill="#fff"/>
<path class="k" d="M129.9,149.6 A3.6,3.6 0 0 1 137.1,149.6" style="stroke-dasharray:none"/>
<line x1="133.5" y1="148.1" x2="133.5" y2="151.1" stroke="#222" stroke-width="1.3"/>
<rect x="13.1" y="157.0" width="7.8" height="2.4" fill="#fff"/>
<path class="k" d="M13.4,158.2 A3.6,3.6 0 0 1 20.6,158.2" style="stroke-dasharray:none"/>
<line x1="17.0" y1="156.7" x2="17.0" y2="159.7" stroke="#222" stroke-width="1.3"/>
<rect x="35.7" y="157.0" width="7.8" height="2.4" fill="#fff"/>
<path class="k" d="M36.0,158.2 A3.6,3.6 0 0 1 43.2,158.2" style="stroke-dasharray:none"/>
<line x1="39.6" y1="156.7" x2="39.6" y2="159.7" stroke="#222" stroke-width="1.3"/>
<rect x="67.7" y="157.0" width="7.8" height="2.4" fill="#fff"/>
<path class="k" d="M68.0,158.2 A3.6,3.6 0 0 1 75.2,158.2" style="stroke-dasharray:none"/>
<line x1="71.6" y1="156.7" x2="71.6" y2="159.7" stroke="#222" stroke-width="1.3"/>
<rect x="129.6" y="90.1" width="7.8" height="2.4" fill="#fff"/>
<path class="kd" d="M129.9,91.3 A3.6,3.6 0 0 1 137.1,91.3" style="stroke-dasharray:none"/>
<line x1="133.5" y1="89.8" x2="133.5" y2="92.8" stroke="#222" stroke-width="1.3"/>
<rect x="141.5" y="90.1" width="7.8" height="2.4" fill="#fff"/>
<path class="kd" d="M141.8,91.3 A3.6,3.6 0 0 1 149.0,91.3" style="stroke-dasharray:none"/>
<line x1="145.4" y1="89.8" x2="145.4" y2="92.8" stroke="#222" stroke-width="1.3"/>
<rect x="191.6" y="90.1" width="7.8" height="2.4" fill="#fff"/>
<path class="kd" d="M191.9,91.3 A3.6,3.6 0 0 1 199.1,91.3" style="stroke-dasharray:none"/>
<line x1="195.5" y1="89.8" x2="195.5" y2="92.8" stroke="#333" stroke-width="1.3"/>
<rect x="13.1" y="111.8" width="7.8" height="2.4" fill="#fff"/>
<path class="kd" d="M13.4,113.0 A3.6,3.6 0 0 1 20.6,113.0" style="stroke-dasharray:none"/>
<line x1="17.0" y1="111.5" x2="17.0" y2="114.5" stroke="#222" stroke-width="1.3"/>
<rect x="141.5" y="111.8" width="7.8" height="2.4" fill="#fff"/>
<path class="kd" d="M141.8,113.0 A3.6,3.6 0 0 1 149.0,113.0" style="stroke-dasharray:none"/>
<line x1="145.4" y1="111.5" x2="145.4" y2="114.5" stroke="#222" stroke-width="1.3"/>
<rect x="191.6" y="111.8" width="7.8" height="2.4" fill="#fff"/>
<path class="kd" d="M191.9,113.0 A3.6,3.6 0 0 1 199.1,113.0" style="stroke-dasharray:none"/>
<line x1="195.5" y1="111.5" x2="195.5" y2="114.5" stroke="#333" stroke-width="1.3"/>
<rect x="13.1" y="165.6" width="7.8" height="2.4" fill="#fff"/>
<path class="kd" d="M13.4,166.8 A3.6,3.6 0 0 1 20.6,166.8" style="stroke-dasharray:none"/>
<line x1="17.0" y1="165.3" x2="17.0" y2="168.3" stroke="#222" stroke-width="1.3"/>
<rect x="141.5" y="165.6" width="7.8" height="2.4" fill="#fff"/>
<path class="kd" d="M141.8,166.8 A3.6,3.6 0 0 1 149.0,166.8" style="stroke-dasharray:none"/>
<line x1="145.4" y1="165.3" x2="145.4" y2="168.3" stroke="#222" stroke-width="1.3"/>
<rect x="51.8" y="213.4" width="7.8" height="2.4" fill="#fff"/>
<path class="k" d="M52.1,214.6 A3.6,3.6 0 0 1 59.3,214.6" style="stroke-dasharray:none"/>
<line x1="55.7" y1="213.1" x2="55.7" y2="216.1" stroke="#333" stroke-width="1.3"/>
<rect x="141.5" y="213.4" width="7.8" height="2.4" fill="#fff"/>
<path class="k" d="M141.8,214.6 A3.6,3.6 0 0 1 149.0,214.6" style="stroke-dasharray:none"/>
<line x1="145.4" y1="213.1" x2="145.4" y2="216.1" stroke="#222" stroke-width="1.3"/>
<rect x="51.8" y="275.3" width="7.8" height="2.4" fill="#fff"/>
<path class="kd" d="M52.1,276.5 A3.6,3.6 0 0 1 59.3,276.5" style="stroke-dasharray:none"/>
<line x1="55.7" y1="275.0" x2="55.7" y2="278.0" stroke="#333" stroke-width="1.3"/>
<rect x="141.5" y="275.3" width="7.8" height="2.4" fill="#fff"/>
<path class="kd" d="M141.8,276.5 A3.6,3.6 0 0 1 149.0,276.5" style="stroke-dasharray:none"/>
<line x1="145.4" y1="275.0" x2="145.4" y2="278.0" stroke="#222" stroke-width="1.3"/>
<rect x="411.6" y="324.1" width="7.8" height="2.4" fill="#fff"/>
<path class="b" d="M411.9,325.3 A3.6,3.6 0 0 1 419.1,325.3" style="stroke-dasharray:none"/>
<line x1="415.5" y1="323.8" x2="415.5" y2="326.8" stroke="#333" stroke-width="1.3"/>
<rect x="411.6" y="336.3" width="7.8" height="2.4" fill="#fff"/>
<path class="r" d="M411.9,337.5 A3.6,3.6 0 0 1 419.1,337.5" style="stroke-dasharray:none"/>
<line x1="415.5" y1="336.0" x2="415.5" y2="339.0" stroke="#333" stroke-width="1.3"/>
<rect x="521.9" y="214.7" width="7.8" height="2.4" fill="#fff"/>
<path class="b" d="M522.2,215.9 A3.6,3.6 0 0 1 529.4,215.9" style="stroke-dasharray:none"/>
<line x1="525.8" y1="214.4" x2="525.8" y2="217.4" stroke="#eaa35c" stroke-width="1.3"/>
<rect x="546.4" y="214.7" width="7.8" height="2.4" fill="#fff"/>
<path class="b" d="M546.7,215.9 A3.6,3.6 0 0 1 553.9,215.9" style="stroke-dasharray:none"/>
<line x1="550.3" y1="214.4" x2="550.3" y2="217.4" stroke="#333" stroke-width="1.3"/>
<rect x="521.9" y="238.9" width="7.8" height="2.4" fill="#fff"/>
<path class="r" d="M522.2,240.1 A3.6,3.6 0 0 1 529.4,240.1" style="stroke-dasharray:none"/>
<line x1="525.8" y1="238.6" x2="525.8" y2="241.6" stroke="#eaa35c" stroke-width="1.3"/>
<rect x="546.4" y="238.9" width="7.8" height="2.4" fill="#fff"/>
<path class="r" d="M546.7,240.1 A3.6,3.6 0 0 1 553.9,240.1" style="stroke-dasharray:none"/>
<line x1="550.3" y1="238.6" x2="550.3" y2="241.6" stroke="#333" stroke-width="1.3"/>
<rect x="521.9" y="121.7" width="7.8" height="2.4" fill="#fff"/>
<path class="od" d="M522.2,122.9 A3.6,3.6 0 0 1 529.4,122.9" style="stroke-dasharray:none"/>
<line x1="525.8" y1="121.4" x2="525.8" y2="124.4" stroke="#eaa35c" stroke-width="1.3"/>
<rect x="546.4" y="121.5" width="7.8" height="2.4" fill="#fff"/>
<path class="o" d="M546.7,122.7 A3.6,3.6 0 0 1 553.9,122.7" style="stroke-dasharray:none"/>
<line x1="550.3" y1="121.2" x2="550.3" y2="124.2" stroke="#333" stroke-width="1.3"/>
<rect x="362.5" y="99.6" width="7.8" height="2.4" fill="#fff"/>
<path class="kd" d="M362.8,100.8 A3.6,3.6 0 0 1 370.0,100.8" style="stroke-dasharray:none"/>
<line x1="366.4" y1="99.3" x2="366.4" y2="102.3" stroke="#333" stroke-width="1.3"/>
<rect x="819.4" y="6.6" width="7.8" height="2.4" fill="#fff"/>
<path class="o" d="M819.7,7.8 A3.6,3.6 0 0 1 826.9,7.8" style="stroke-dasharray:none"/>
<line x1="823.3" y1="6.3" x2="823.3" y2="9.3" stroke="#eaa35c" stroke-width="1.3"/>
<rect x="713.1" y="19.0" width="7.8" height="2.4" fill="#fff"/>
<path class="k" d="M713.4,20.2 A3.6,3.6 0 0 1 720.6,20.2" style="stroke-dasharray:none"/>
<line x1="717.0" y1="18.7" x2="717.0" y2="21.7" stroke="#eaa35c" stroke-width="1.3"/>
<rect x="669.4" y="79.9" width="7.8" height="2.4" fill="#fff"/>
<path class="k" d="M669.7,81.1 A3.6,3.6 0 0 1 676.9,81.1" style="stroke-dasharray:none"/>
<line x1="673.3" y1="79.6" x2="673.3" y2="82.6" stroke="#eaa35c" stroke-width="1.3"/>
<rect x="754.5" y="79.8" width="7.8" height="2.4" fill="#fff"/>
<path class="o" d="M754.8,81.0 A3.6,3.6 0 0 1 762.0,81.0" style="stroke-dasharray:none"/>
<line x1="758.4" y1="79.5" x2="758.4" y2="82.5" stroke="#333" stroke-width="1.3"/>
<rect x="713.1" y="92.4" width="7.8" height="2.4" fill="#fff"/>
<path class="kd" d="M713.4,93.6 A3.6,3.6 0 0 1 720.6,93.6" style="stroke-dasharray:none"/>
<line x1="717.0" y1="92.1" x2="717.0" y2="95.1" stroke="#222" stroke-width="1.3"/>
<rect x="644.3" y="165.7" width="7.8" height="2.4" fill="#fff"/>
<path class="o" d="M644.6,166.9 A3.6,3.6 0 0 1 651.8,166.9" style="stroke-dasharray:none"/>
<line x1="648.2" y1="165.4" x2="648.2" y2="168.4" stroke="#333" stroke-width="1.3"/>
<rect x="844.5" y="190.3" width="7.8" height="2.4" fill="#fff"/>
<path class="kd" d="M844.8,191.5 A3.6,3.6 0 0 1 852.0,191.5" style="stroke-dasharray:none"/>
<line x1="848.4" y1="190.0" x2="848.4" y2="193.0" stroke="#333" stroke-width="1.3"/>
<rect x="809.4" y="214.7" width="7.8" height="2.4" fill="#fff"/>
<path class="b" d="M809.7,215.9 A3.6,3.6 0 0 1 816.9,215.9" style="stroke-dasharray:none"/>
<line x1="813.3" y1="214.4" x2="813.3" y2="217.4" stroke="#333" stroke-width="1.3"/>
<rect x="809.4" y="227.2" width="7.8" height="2.4" fill="#fff"/>
<path class="k" d="M809.7,228.4 A3.6,3.6 0 0 1 816.9,228.4" style="stroke-dasharray:none"/>
<line x1="813.3" y1="226.9" x2="813.3" y2="229.9" stroke="#333" stroke-width="1.3"/>
<rect x="739.4" y="238.9" width="7.8" height="2.4" fill="#fff"/>
<path class="r" d="M739.7,240.1 A3.6,3.6 0 0 1 746.9,240.1" style="stroke-dasharray:none"/>
<line x1="743.3" y1="238.6" x2="743.3" y2="241.6" stroke="#222" stroke-width="1.3"/>
<rect x="809.4" y="238.9" width="7.8" height="2.4" fill="#fff"/>
<path class="r" d="M809.7,240.1 A3.6,3.6 0 0 1 816.9,240.1" style="stroke-dasharray:none"/>
<line x1="813.3" y1="238.6" x2="813.3" y2="241.6" stroke="#333" stroke-width="1.3"/>
<rect x="1078.4" y="281.3" width="7.8" height="2.4" fill="#fff"/>
<path class="k" d="M1078.7,282.5 A3.6,3.6 0 0 1 1085.9,282.5" style="stroke-dasharray:none"/>
<line x1="1082.3" y1="281.0" x2="1082.3" y2="284.0" stroke="#cc5548" stroke-width="1.3"/>
<rect x="1147.1" y="281.3" width="7.8" height="2.4" fill="#fff"/>
<path class="k" d="M1147.4,282.5 A3.6,3.6 0 0 1 1154.6,282.5" style="stroke-dasharray:none"/>
<line x1="1151.0" y1="281.0" x2="1151.0" y2="284.0" stroke="#222" stroke-width="1.3"/>
<rect x="1166.5" y="281.3" width="7.8" height="2.4" fill="#fff"/>
<path class="k" d="M1166.8,282.5 A3.6,3.6 0 0 1 1174.0,282.5" style="stroke-dasharray:none"/>
<line x1="1170.4" y1="281.0" x2="1170.4" y2="284.0" stroke="#5b63a8" stroke-width="1.3"/>
<rect x="1166.5" y="227.1" width="7.8" height="2.4" fill="#fff"/>
<path class="o" d="M1166.8,228.3 A3.6,3.6 0 0 1 1174.0,228.3" style="stroke-dasharray:none"/>
<line x1="1170.4" y1="226.8" x2="1170.4" y2="229.8" stroke="#5b63a8" stroke-width="1.3"/>
<rect x="1054.1" y="333.0" width="7.8" height="2.4" fill="#fff"/>
<path class="k" d="M1054.4,334.2 A3.6,3.6 0 0 1 1061.6,334.2" style="stroke-dasharray:none"/>
<line x1="1058.0" y1="332.7" x2="1058.0" y2="335.7" stroke="#222" stroke-width="1.3"/>
<rect x="1191.1" y="333.0" width="7.8" height="2.4" fill="#fff"/>
<path class="k" d="M1191.4,334.2 A3.6,3.6 0 0 1 1198.6,334.2" style="stroke-dasharray:none"/>
<line x1="1195.0" y1="332.7" x2="1195.0" y2="335.7" stroke="#222" stroke-width="1.3"/>
<rect x="1054.1" y="357.8" width="7.8" height="2.4" fill="#fff"/>
<path class="o" d="M1054.4,359.0 A3.6,3.6 0 0 1 1061.6,359.0" style="stroke-dasharray:none"/>
<line x1="1058.0" y1="357.5" x2="1058.0" y2="360.5" stroke="#222" stroke-width="1.3"/>
<rect x="1078.4" y="357.8" width="7.8" height="2.4" fill="#fff"/>
<path class="o" d="M1078.7,359.0 A3.6,3.6 0 0 1 1085.9,359.0" style="stroke-dasharray:none"/>
<line x1="1082.3" y1="357.5" x2="1082.3" y2="360.5" stroke="#cc5548" stroke-width="1.3"/>
<rect x="1166.5" y="357.8" width="7.8" height="2.4" fill="#fff"/>
<path class="o" d="M1166.8,359.0 A3.6,3.6 0 0 1 1174.0,359.0" style="stroke-dasharray:none"/>
<line x1="1170.4" y1="357.5" x2="1170.4" y2="360.5" stroke="#5b63a8" stroke-width="1.3"/>
<rect x="1191.1" y="357.8" width="7.8" height="2.4" fill="#fff"/>
<path class="o" d="M1191.4,359.0 A3.6,3.6 0 0 1 1198.6,359.0" style="stroke-dasharray:none"/>
<line x1="1195.0" y1="357.5" x2="1195.0" y2="360.5" stroke="#222" stroke-width="1.3"/>
<rect x="1166.5" y="366.9" width="7.8" height="2.4" fill="#fff"/>
<path class="r" d="M1166.8,368.1 A3.6,3.6 0 0 1 1174.0,368.1" style="stroke-dasharray:none"/>
<line x1="1170.4" y1="366.6" x2="1170.4" y2="369.6" stroke="#5b63a8" stroke-width="1.3"/>
<rect x="1191.1" y="366.9" width="7.8" height="2.4" fill="#fff"/>
<path class="r" d="M1191.4,368.1 A3.6,3.6 0 0 1 1198.6,368.1" style="stroke-dasharray:none"/>
<line x1="1195.0" y1="366.6" x2="1195.0" y2="369.6" stroke="#222" stroke-width="1.3"/>
<rect x="1054.1" y="376.9" width="7.8" height="2.4" fill="#fff"/>
<path class="b" d="M1054.4,378.1 A3.6,3.6 0 0 1 1061.6,378.1" style="stroke-dasharray:none"/>
<line x1="1058.0" y1="376.6" x2="1058.0" y2="379.6" stroke="#222" stroke-width="1.3"/>
<rect x="1078.4" y="376.9" width="7.8" height="2.4" fill="#fff"/>
<path class="b" d="M1078.7,378.1 A3.6,3.6 0 0 1 1085.9,378.1" style="stroke-dasharray:none"/>
<line x1="1082.3" y1="376.6" x2="1082.3" y2="379.6" stroke="#cc5548" stroke-width="1.3"/>
<rect x="1122.4" y="590.6" width="7.8" height="2.4" fill="#fff"/>
<path class="k" d="M1122.7,591.8 A3.6,3.6 0 0 1 1129.9,591.8" style="stroke-dasharray:none"/>
<line x1="1126.3" y1="590.3" x2="1126.3" y2="593.3" stroke="#222" stroke-width="1.3"/>
<rect x="1062.9" y="610.5" width="7.8" height="2.4" fill="#fff"/>
<path class="kd" d="M1063.2,611.7 A3.6,3.6 0 0 1 1070.4,611.7" style="stroke-dasharray:none"/>
<line x1="1066.8" y1="610.2" x2="1066.8" y2="613.2" stroke="#222" stroke-width="1.3"/>
<rect x="1122.4" y="610.5" width="7.8" height="2.4" fill="#fff"/>
<path class="kd" d="M1122.7,611.7 A3.6,3.6 0 0 1 1129.9,611.7" style="stroke-dasharray:none"/>
<line x1="1126.3" y1="610.2" x2="1126.3" y2="613.2" stroke="#222" stroke-width="1.3"/>
<rect x="1264.7" y="610.5" width="7.8" height="2.4" fill="#fff"/>
<path class="kd" d="M1265.0,611.7 A3.6,3.6 0 0 1 1272.2,611.7" style="stroke-dasharray:none"/>
<line x1="1268.6" y1="610.2" x2="1268.6" y2="613.2" stroke="#222" stroke-width="1.3"/>
<rect x="94.1" y="798.6" width="7.8" height="2.4" fill="#fff"/>
<path class="kd" d="M94.4,799.8 A3.6,3.6 0 0 1 101.6,799.8" style="stroke-dasharray:none"/>
<line x1="98.0" y1="798.3" x2="98.0" y2="801.3" stroke="#eaa35c" stroke-width="1.3"/>
<rect x="94.1" y="811.5" width="7.8" height="2.4" fill="#fff"/>
<path class="k" d="M94.4,812.7 A3.6,3.6 0 0 1 101.6,812.7" style="stroke-dasharray:none"/>
<line x1="98.0" y1="811.2" x2="98.0" y2="814.2" stroke="#eaa35c" stroke-width="1.3"/>
<rect x="94.1" y="786.8" width="7.8" height="2.4" fill="#fff"/>
<path class="gd" d="M94.4,788.0 A3.6,3.6 0 0 1 101.6,788.0" style="stroke-dasharray:none"/>
<line x1="98.0" y1="786.5" x2="98.0" y2="789.5" stroke="#eaa35c" stroke-width="1.3"/>
<rect x="152.8" y="614.8" width="7.8" height="2.4" fill="#fff"/>
<path class="g" d="M153.1,616.0 A3.6,3.6 0 0 1 160.3,616.0" style="stroke-dasharray:none"/>
<line x1="156.7" y1="614.5" x2="156.7" y2="617.5" stroke="#222" stroke-width="1.3"/>
<rect x="201.7" y="614.8" width="7.8" height="2.4" fill="#fff"/>
<path class="g" d="M202.0,616.0 A3.6,3.6 0 0 1 209.2,616.0" style="stroke-dasharray:none"/>
<line x1="205.6" y1="614.5" x2="205.6" y2="617.5" stroke="#222" stroke-width="1.3"/>
<rect x="152.8" y="626.6" width="7.8" height="2.4" fill="#fff"/>
<path class="o" d="M153.1,627.8 A3.6,3.6 0 0 1 160.3,627.8" style="stroke-dasharray:none"/>
<line x1="156.7" y1="626.3" x2="156.7" y2="629.3" stroke="#222" stroke-width="1.3"/>
<rect x="201.7" y="626.6" width="7.8" height="2.4" fill="#fff"/>
<path class="o" d="M202.0,627.8 A3.6,3.6 0 0 1 209.2,627.8" style="stroke-dasharray:none"/>
<line x1="205.6" y1="626.3" x2="205.6" y2="629.3" stroke="#222" stroke-width="1.3"/>
<rect x="240.7" y="626.6" width="7.8" height="2.4" fill="#fff"/>
<path class="o" d="M241.0,627.8 A3.6,3.6 0 0 1 248.2,627.8" style="stroke-dasharray:none"/>
<line x1="244.6" y1="626.3" x2="244.6" y2="629.3" stroke="#2e9e6e" stroke-width="1.3"/>
<rect x="843.3" y="168.3" width="22.4" height="2.4" fill="#fff"/>
<path class="o" d="M843.5,169.5 A4,4 0 0 1 847.5,165.5 L861.5,165.5 A4,4 0 0 1 865.5,169.5" style="stroke-dasharray:none"/>
<line class="kd" x1="848.4" y1="167.0" x2="848.4" y2="172.0"/>
<line class="kd" x1="860.5" y1="167.0" x2="860.5" y2="172.0"/>
<rect x="1300.3" y="227.1" width="22.4" height="2.4" fill="#fff"/>
<path class="o" d="M1300.5,228.3 A4,4 0 0 1 1304.5,224.3 L1318.5,224.3 A4,4 0 0 1 1322.5,228.3" style="stroke-dasharray:none"/>
<line class="kd" x1="1305.5" y1="226.0" x2="1305.5" y2="231.0"/>
<line class="kd" x1="1317.6" y1="226.0" x2="1317.6" y2="231.0"/>
<rect x="411.3" y="324.1" width="20.4" height="2.4" fill="#fff"/>
<path class="b" d="M411.5,325.3 A4,4 0 0 1 415.5,321.3 L427.5,321.3 A4,4 0 0 1 431.5,325.3" style="stroke-dasharray:none"/>
<line class="kd" x1="415.5" y1="323.0" x2="415.5" y2="328.0"/>
<rect x="411.3" y="336.3" width="20.4" height="2.4" fill="#fff"/>
<path class="r" d="M411.5,337.5 A4,4 0 0 1 415.5,333.5 L427.5,333.5 A4,4 0 0 1 431.5,337.5" style="stroke-dasharray:none"/>
<line class="kd" x1="415.5" y1="335.0" x2="415.5" y2="340.0"/>
<rect x="411.3" y="275.3" width="20.4" height="2.4" fill="#fff"/>
<path class="kd" d="M411.5,276.5 A4,4 0 0 1 415.5,272.5 L427.5,272.5 A4,4 0 0 1 431.5,276.5" style="stroke-dasharray:none"/>
<line class="kd" x1="415.5" y1="273.0" x2="415.5" y2="278.0"/>
<rect x="496.8" y="275.3" width="33.4" height="2.4" fill="#fff"/>
<path class="kd" d="M497.0,276.5 A4,4 0 0 1 501.0,272.5 L526.0,272.5 A4,4 0 0 1 530.0,276.5" style="stroke-dasharray:none"/>
<line class="b" x1="501.0" y1="273.0" x2="501.0" y2="278.0"/>
<line class="r" x1="513.4" y1="273.0" x2="513.4" y2="278.0"/>
<line class="o" x1="525.8" y1="273.0" x2="525.8" y2="278.0"/>
</svg>
</body></html>
